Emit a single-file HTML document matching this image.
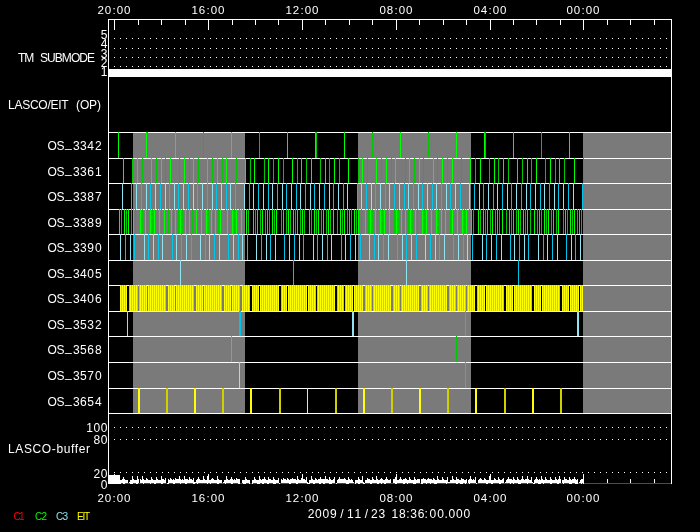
<!DOCTYPE html>
<html><head><meta charset="utf-8"><title>LASCO/EIT schedule</title>
<style>html,body{margin:0;padding:0;background:#000;overflow:hidden}svg{display:block;will-change:transform}text{font-family:"Liberation Sans",sans-serif;}</style>
</head><body>
<svg width="700" height="532" viewBox="0 0 700 532" shape-rendering="crispEdges">
<rect width="700" height="532" fill="#000"/>
<rect x="133" y="133" width="112" height="280" fill="#7a7a7a"/>
<rect x="358" y="133" width="113" height="280" fill="#7a7a7a"/>
<rect x="583" y="133" width="88" height="280" fill="#7a7a7a"/>
<rect x="108" y="19" width="1" height="465" fill="#fff"/>
<rect x="671" y="19" width="1" height="465" fill="#fff"/>
<rect x="108" y="19" width="564" height="1" fill="#fff"/>
<rect x="108" y="132" width="564" height="1" fill="#fff"/>
<rect x="108" y="158" width="564" height="1" fill="#fff"/>
<rect x="108" y="183" width="564" height="1" fill="#fff"/>
<rect x="108" y="209" width="564" height="1" fill="#fff"/>
<rect x="108" y="234" width="564" height="1" fill="#fff"/>
<rect x="108" y="260" width="564" height="1" fill="#fff"/>
<rect x="108" y="285" width="564" height="1" fill="#fff"/>
<rect x="108" y="311" width="564" height="1" fill="#fff"/>
<rect x="108" y="336" width="564" height="1" fill="#fff"/>
<rect x="108" y="362" width="564" height="1" fill="#fff"/>
<rect x="108" y="388" width="564" height="1" fill="#fff"/>
<rect x="108" y="413" width="564" height="1" fill="#fff"/>
<rect x="108" y="69" width="564" height="8" fill="#fff"/>
<rect x="114" y="19" width="1" height="11" fill="#fff"/>
<rect x="138" y="19" width="1" height="6" fill="#fff"/>
<rect x="161" y="19" width="1" height="6" fill="#fff"/>
<rect x="185" y="19" width="1" height="6" fill="#fff"/>
<rect x="208" y="19" width="1" height="11" fill="#fff"/>
<rect x="232" y="19" width="1" height="6" fill="#fff"/>
<rect x="255" y="19" width="1" height="6" fill="#fff"/>
<rect x="278" y="19" width="1" height="6" fill="#fff"/>
<rect x="302" y="19" width="1" height="11" fill="#fff"/>
<rect x="325" y="19" width="1" height="6" fill="#fff"/>
<rect x="349" y="19" width="1" height="6" fill="#fff"/>
<rect x="372" y="19" width="1" height="6" fill="#fff"/>
<rect x="396" y="19" width="1" height="11" fill="#fff"/>
<rect x="419" y="19" width="1" height="6" fill="#fff"/>
<rect x="443" y="19" width="1" height="6" fill="#fff"/>
<rect x="466" y="19" width="1" height="6" fill="#fff"/>
<rect x="490" y="19" width="1" height="11" fill="#fff"/>
<rect x="513" y="19" width="1" height="6" fill="#fff"/>
<rect x="536" y="19" width="1" height="6" fill="#fff"/>
<rect x="560" y="19" width="1" height="6" fill="#fff"/>
<rect x="583" y="19" width="1" height="11" fill="#fff"/>
<rect x="607" y="19" width="1" height="6" fill="#fff"/>
<rect x="630" y="19" width="1" height="6" fill="#fff"/>
<rect x="654" y="19" width="1" height="6" fill="#fff"/>
<path d="M114 38h1v1h-1zM120 38h1v1h-1zM126 38h1v1h-1zM132 38h1v1h-1zM138 38h1v1h-1zM144 38h1v1h-1zM150 38h1v1h-1zM156 38h1v1h-1zM162 38h1v1h-1zM168 38h1v1h-1zM174 38h1v1h-1zM180 38h1v1h-1zM186 38h1v1h-1zM192 38h1v1h-1zM198 38h1v1h-1zM204 38h1v1h-1zM210 38h1v1h-1zM216 38h1v1h-1zM222 38h1v1h-1zM228 38h1v1h-1zM234 38h1v1h-1zM240 38h1v1h-1zM246 38h1v1h-1zM252 38h1v1h-1zM258 38h1v1h-1zM264 38h1v1h-1zM270 38h1v1h-1zM276 38h1v1h-1zM282 38h1v1h-1zM288 38h1v1h-1zM294 38h1v1h-1zM300 38h1v1h-1zM306 38h1v1h-1zM312 38h1v1h-1zM318 38h1v1h-1zM324 38h1v1h-1zM330 38h1v1h-1zM336 38h1v1h-1zM342 38h1v1h-1zM348 38h1v1h-1zM354 38h1v1h-1zM360 38h1v1h-1zM366 38h1v1h-1zM372 38h1v1h-1zM378 38h1v1h-1zM384 38h1v1h-1zM390 38h1v1h-1zM396 38h1v1h-1zM402 38h1v1h-1zM408 38h1v1h-1zM414 38h1v1h-1zM420 38h1v1h-1zM426 38h1v1h-1zM432 38h1v1h-1zM438 38h1v1h-1zM444 38h1v1h-1zM450 38h1v1h-1zM456 38h1v1h-1zM462 38h1v1h-1zM468 38h1v1h-1zM474 38h1v1h-1zM480 38h1v1h-1zM486 38h1v1h-1zM492 38h1v1h-1zM498 38h1v1h-1zM504 38h1v1h-1zM510 38h1v1h-1zM516 38h1v1h-1zM522 38h1v1h-1zM528 38h1v1h-1zM534 38h1v1h-1zM540 38h1v1h-1zM546 38h1v1h-1zM552 38h1v1h-1zM558 38h1v1h-1zM564 38h1v1h-1zM570 38h1v1h-1zM576 38h1v1h-1zM582 38h1v1h-1zM588 38h1v1h-1zM594 38h1v1h-1zM600 38h1v1h-1zM606 38h1v1h-1zM612 38h1v1h-1zM618 38h1v1h-1zM624 38h1v1h-1zM630 38h1v1h-1zM636 38h1v1h-1zM642 38h1v1h-1zM648 38h1v1h-1zM654 38h1v1h-1zM660 38h1v1h-1zM666 38h1v1h-1zM114 48h1v1h-1zM120 48h1v1h-1zM126 48h1v1h-1zM132 48h1v1h-1zM138 48h1v1h-1zM144 48h1v1h-1zM150 48h1v1h-1zM156 48h1v1h-1zM162 48h1v1h-1zM168 48h1v1h-1zM174 48h1v1h-1zM180 48h1v1h-1zM186 48h1v1h-1zM192 48h1v1h-1zM198 48h1v1h-1zM204 48h1v1h-1zM210 48h1v1h-1zM216 48h1v1h-1zM222 48h1v1h-1zM228 48h1v1h-1zM234 48h1v1h-1zM240 48h1v1h-1zM246 48h1v1h-1zM252 48h1v1h-1zM258 48h1v1h-1zM264 48h1v1h-1zM270 48h1v1h-1zM276 48h1v1h-1zM282 48h1v1h-1zM288 48h1v1h-1zM294 48h1v1h-1zM300 48h1v1h-1zM306 48h1v1h-1zM312 48h1v1h-1zM318 48h1v1h-1zM324 48h1v1h-1zM330 48h1v1h-1zM336 48h1v1h-1zM342 48h1v1h-1zM348 48h1v1h-1zM354 48h1v1h-1zM360 48h1v1h-1zM366 48h1v1h-1zM372 48h1v1h-1zM378 48h1v1h-1zM384 48h1v1h-1zM390 48h1v1h-1zM396 48h1v1h-1zM402 48h1v1h-1zM408 48h1v1h-1zM414 48h1v1h-1zM420 48h1v1h-1zM426 48h1v1h-1zM432 48h1v1h-1zM438 48h1v1h-1zM444 48h1v1h-1zM450 48h1v1h-1zM456 48h1v1h-1zM462 48h1v1h-1zM468 48h1v1h-1zM474 48h1v1h-1zM480 48h1v1h-1zM486 48h1v1h-1zM492 48h1v1h-1zM498 48h1v1h-1zM504 48h1v1h-1zM510 48h1v1h-1zM516 48h1v1h-1zM522 48h1v1h-1zM528 48h1v1h-1zM534 48h1v1h-1zM540 48h1v1h-1zM546 48h1v1h-1zM552 48h1v1h-1zM558 48h1v1h-1zM564 48h1v1h-1zM570 48h1v1h-1zM576 48h1v1h-1zM582 48h1v1h-1zM588 48h1v1h-1zM594 48h1v1h-1zM600 48h1v1h-1zM606 48h1v1h-1zM612 48h1v1h-1zM618 48h1v1h-1zM624 48h1v1h-1zM630 48h1v1h-1zM636 48h1v1h-1zM642 48h1v1h-1zM648 48h1v1h-1zM654 48h1v1h-1zM660 48h1v1h-1zM666 48h1v1h-1zM114 57h1v1h-1zM120 57h1v1h-1zM126 57h1v1h-1zM132 57h1v1h-1zM138 57h1v1h-1zM144 57h1v1h-1zM150 57h1v1h-1zM156 57h1v1h-1zM162 57h1v1h-1zM168 57h1v1h-1zM174 57h1v1h-1zM180 57h1v1h-1zM186 57h1v1h-1zM192 57h1v1h-1zM198 57h1v1h-1zM204 57h1v1h-1zM210 57h1v1h-1zM216 57h1v1h-1zM222 57h1v1h-1zM228 57h1v1h-1zM234 57h1v1h-1zM240 57h1v1h-1zM246 57h1v1h-1zM252 57h1v1h-1zM258 57h1v1h-1zM264 57h1v1h-1zM270 57h1v1h-1zM276 57h1v1h-1zM282 57h1v1h-1zM288 57h1v1h-1zM294 57h1v1h-1zM300 57h1v1h-1zM306 57h1v1h-1zM312 57h1v1h-1zM318 57h1v1h-1zM324 57h1v1h-1zM330 57h1v1h-1zM336 57h1v1h-1zM342 57h1v1h-1zM348 57h1v1h-1zM354 57h1v1h-1zM360 57h1v1h-1zM366 57h1v1h-1zM372 57h1v1h-1zM378 57h1v1h-1zM384 57h1v1h-1zM390 57h1v1h-1zM396 57h1v1h-1zM402 57h1v1h-1zM408 57h1v1h-1zM414 57h1v1h-1zM420 57h1v1h-1zM426 57h1v1h-1zM432 57h1v1h-1zM438 57h1v1h-1zM444 57h1v1h-1zM450 57h1v1h-1zM456 57h1v1h-1zM462 57h1v1h-1zM468 57h1v1h-1zM474 57h1v1h-1zM480 57h1v1h-1zM486 57h1v1h-1zM492 57h1v1h-1zM498 57h1v1h-1zM504 57h1v1h-1zM510 57h1v1h-1zM516 57h1v1h-1zM522 57h1v1h-1zM528 57h1v1h-1zM534 57h1v1h-1zM540 57h1v1h-1zM546 57h1v1h-1zM552 57h1v1h-1zM558 57h1v1h-1zM564 57h1v1h-1zM570 57h1v1h-1zM576 57h1v1h-1zM582 57h1v1h-1zM588 57h1v1h-1zM594 57h1v1h-1zM600 57h1v1h-1zM606 57h1v1h-1zM612 57h1v1h-1zM618 57h1v1h-1zM624 57h1v1h-1zM630 57h1v1h-1zM636 57h1v1h-1zM642 57h1v1h-1zM648 57h1v1h-1zM654 57h1v1h-1zM660 57h1v1h-1zM666 57h1v1h-1zM114 66h1v1h-1zM120 66h1v1h-1zM126 66h1v1h-1zM132 66h1v1h-1zM138 66h1v1h-1zM144 66h1v1h-1zM150 66h1v1h-1zM156 66h1v1h-1zM162 66h1v1h-1zM168 66h1v1h-1zM174 66h1v1h-1zM180 66h1v1h-1zM186 66h1v1h-1zM192 66h1v1h-1zM198 66h1v1h-1zM204 66h1v1h-1zM210 66h1v1h-1zM216 66h1v1h-1zM222 66h1v1h-1zM228 66h1v1h-1zM234 66h1v1h-1zM240 66h1v1h-1zM246 66h1v1h-1zM252 66h1v1h-1zM258 66h1v1h-1zM264 66h1v1h-1zM270 66h1v1h-1zM276 66h1v1h-1zM282 66h1v1h-1zM288 66h1v1h-1zM294 66h1v1h-1zM300 66h1v1h-1zM306 66h1v1h-1zM312 66h1v1h-1zM318 66h1v1h-1zM324 66h1v1h-1zM330 66h1v1h-1zM336 66h1v1h-1zM342 66h1v1h-1zM348 66h1v1h-1zM354 66h1v1h-1zM360 66h1v1h-1zM366 66h1v1h-1zM372 66h1v1h-1zM378 66h1v1h-1zM384 66h1v1h-1zM390 66h1v1h-1zM396 66h1v1h-1zM402 66h1v1h-1zM408 66h1v1h-1zM414 66h1v1h-1zM420 66h1v1h-1zM426 66h1v1h-1zM432 66h1v1h-1zM438 66h1v1h-1zM444 66h1v1h-1zM450 66h1v1h-1zM456 66h1v1h-1zM462 66h1v1h-1zM468 66h1v1h-1zM474 66h1v1h-1zM480 66h1v1h-1zM486 66h1v1h-1zM492 66h1v1h-1zM498 66h1v1h-1zM504 66h1v1h-1zM510 66h1v1h-1zM516 66h1v1h-1zM522 66h1v1h-1zM528 66h1v1h-1zM534 66h1v1h-1zM540 66h1v1h-1zM546 66h1v1h-1zM552 66h1v1h-1zM558 66h1v1h-1zM564 66h1v1h-1zM570 66h1v1h-1zM576 66h1v1h-1zM582 66h1v1h-1zM588 66h1v1h-1zM594 66h1v1h-1zM600 66h1v1h-1zM606 66h1v1h-1zM612 66h1v1h-1zM618 66h1v1h-1zM624 66h1v1h-1zM630 66h1v1h-1zM636 66h1v1h-1zM642 66h1v1h-1zM648 66h1v1h-1zM654 66h1v1h-1zM660 66h1v1h-1zM666 66h1v1h-1zM114 427h1v1h-1zM120 427h1v1h-1zM126 427h1v1h-1zM132 427h1v1h-1zM138 427h1v1h-1zM144 427h1v1h-1zM150 427h1v1h-1zM156 427h1v1h-1zM162 427h1v1h-1zM168 427h1v1h-1zM174 427h1v1h-1zM180 427h1v1h-1zM186 427h1v1h-1zM192 427h1v1h-1zM198 427h1v1h-1zM204 427h1v1h-1zM210 427h1v1h-1zM216 427h1v1h-1zM222 427h1v1h-1zM228 427h1v1h-1zM234 427h1v1h-1zM240 427h1v1h-1zM246 427h1v1h-1zM252 427h1v1h-1zM258 427h1v1h-1zM264 427h1v1h-1zM270 427h1v1h-1zM276 427h1v1h-1zM282 427h1v1h-1zM288 427h1v1h-1zM294 427h1v1h-1zM300 427h1v1h-1zM306 427h1v1h-1zM312 427h1v1h-1zM318 427h1v1h-1zM324 427h1v1h-1zM330 427h1v1h-1zM336 427h1v1h-1zM342 427h1v1h-1zM348 427h1v1h-1zM354 427h1v1h-1zM360 427h1v1h-1zM366 427h1v1h-1zM372 427h1v1h-1zM378 427h1v1h-1zM384 427h1v1h-1zM390 427h1v1h-1zM396 427h1v1h-1zM402 427h1v1h-1zM408 427h1v1h-1zM414 427h1v1h-1zM420 427h1v1h-1zM426 427h1v1h-1zM432 427h1v1h-1zM438 427h1v1h-1zM444 427h1v1h-1zM450 427h1v1h-1zM456 427h1v1h-1zM462 427h1v1h-1zM468 427h1v1h-1zM474 427h1v1h-1zM480 427h1v1h-1zM486 427h1v1h-1zM492 427h1v1h-1zM498 427h1v1h-1zM504 427h1v1h-1zM510 427h1v1h-1zM516 427h1v1h-1zM522 427h1v1h-1zM528 427h1v1h-1zM534 427h1v1h-1zM540 427h1v1h-1zM546 427h1v1h-1zM552 427h1v1h-1zM558 427h1v1h-1zM564 427h1v1h-1zM570 427h1v1h-1zM576 427h1v1h-1zM582 427h1v1h-1zM588 427h1v1h-1zM594 427h1v1h-1zM600 427h1v1h-1zM606 427h1v1h-1zM612 427h1v1h-1zM618 427h1v1h-1zM624 427h1v1h-1zM630 427h1v1h-1zM636 427h1v1h-1zM642 427h1v1h-1zM648 427h1v1h-1zM654 427h1v1h-1zM660 427h1v1h-1zM666 427h1v1h-1zM114 439h1v1h-1zM120 439h1v1h-1zM126 439h1v1h-1zM132 439h1v1h-1zM138 439h1v1h-1zM144 439h1v1h-1zM150 439h1v1h-1zM156 439h1v1h-1zM162 439h1v1h-1zM168 439h1v1h-1zM174 439h1v1h-1zM180 439h1v1h-1zM186 439h1v1h-1zM192 439h1v1h-1zM198 439h1v1h-1zM204 439h1v1h-1zM210 439h1v1h-1zM216 439h1v1h-1zM222 439h1v1h-1zM228 439h1v1h-1zM234 439h1v1h-1zM240 439h1v1h-1zM246 439h1v1h-1zM252 439h1v1h-1zM258 439h1v1h-1zM264 439h1v1h-1zM270 439h1v1h-1zM276 439h1v1h-1zM282 439h1v1h-1zM288 439h1v1h-1zM294 439h1v1h-1zM300 439h1v1h-1zM306 439h1v1h-1zM312 439h1v1h-1zM318 439h1v1h-1zM324 439h1v1h-1zM330 439h1v1h-1zM336 439h1v1h-1zM342 439h1v1h-1zM348 439h1v1h-1zM354 439h1v1h-1zM360 439h1v1h-1zM366 439h1v1h-1zM372 439h1v1h-1zM378 439h1v1h-1zM384 439h1v1h-1zM390 439h1v1h-1zM396 439h1v1h-1zM402 439h1v1h-1zM408 439h1v1h-1zM414 439h1v1h-1zM420 439h1v1h-1zM426 439h1v1h-1zM432 439h1v1h-1zM438 439h1v1h-1zM444 439h1v1h-1zM450 439h1v1h-1zM456 439h1v1h-1zM462 439h1v1h-1zM468 439h1v1h-1zM474 439h1v1h-1zM480 439h1v1h-1zM486 439h1v1h-1zM492 439h1v1h-1zM498 439h1v1h-1zM504 439h1v1h-1zM510 439h1v1h-1zM516 439h1v1h-1zM522 439h1v1h-1zM528 439h1v1h-1zM534 439h1v1h-1zM540 439h1v1h-1zM546 439h1v1h-1zM552 439h1v1h-1zM558 439h1v1h-1zM564 439h1v1h-1zM570 439h1v1h-1zM576 439h1v1h-1zM582 439h1v1h-1zM588 439h1v1h-1zM594 439h1v1h-1zM600 439h1v1h-1zM606 439h1v1h-1zM612 439h1v1h-1zM618 439h1v1h-1zM624 439h1v1h-1zM630 439h1v1h-1zM636 439h1v1h-1zM642 439h1v1h-1zM648 439h1v1h-1zM654 439h1v1h-1zM660 439h1v1h-1zM666 439h1v1h-1zM114 472h1v1h-1zM120 472h1v1h-1zM126 472h1v1h-1zM132 472h1v1h-1zM138 472h1v1h-1zM144 472h1v1h-1zM150 472h1v1h-1zM156 472h1v1h-1zM162 472h1v1h-1zM168 472h1v1h-1zM174 472h1v1h-1zM180 472h1v1h-1zM186 472h1v1h-1zM192 472h1v1h-1zM198 472h1v1h-1zM204 472h1v1h-1zM210 472h1v1h-1zM216 472h1v1h-1zM222 472h1v1h-1zM228 472h1v1h-1zM234 472h1v1h-1zM240 472h1v1h-1zM246 472h1v1h-1zM252 472h1v1h-1zM258 472h1v1h-1zM264 472h1v1h-1zM270 472h1v1h-1zM276 472h1v1h-1zM282 472h1v1h-1zM288 472h1v1h-1zM294 472h1v1h-1zM300 472h1v1h-1zM306 472h1v1h-1zM312 472h1v1h-1zM318 472h1v1h-1zM324 472h1v1h-1zM330 472h1v1h-1zM336 472h1v1h-1zM342 472h1v1h-1zM348 472h1v1h-1zM354 472h1v1h-1zM360 472h1v1h-1zM366 472h1v1h-1zM372 472h1v1h-1zM378 472h1v1h-1zM384 472h1v1h-1zM390 472h1v1h-1zM396 472h1v1h-1zM402 472h1v1h-1zM408 472h1v1h-1zM414 472h1v1h-1zM420 472h1v1h-1zM426 472h1v1h-1zM432 472h1v1h-1zM438 472h1v1h-1zM444 472h1v1h-1zM450 472h1v1h-1zM456 472h1v1h-1zM462 472h1v1h-1zM468 472h1v1h-1zM474 472h1v1h-1zM480 472h1v1h-1zM486 472h1v1h-1zM492 472h1v1h-1zM498 472h1v1h-1zM504 472h1v1h-1zM510 472h1v1h-1zM516 472h1v1h-1zM522 472h1v1h-1zM528 472h1v1h-1zM534 472h1v1h-1zM540 472h1v1h-1zM546 472h1v1h-1zM552 472h1v1h-1zM558 472h1v1h-1zM564 472h1v1h-1zM570 472h1v1h-1zM576 472h1v1h-1zM582 472h1v1h-1zM588 472h1v1h-1zM594 472h1v1h-1zM600 472h1v1h-1zM606 472h1v1h-1zM612 472h1v1h-1zM618 472h1v1h-1zM624 472h1v1h-1zM630 472h1v1h-1zM636 472h1v1h-1zM642 472h1v1h-1zM648 472h1v1h-1zM654 472h1v1h-1zM660 472h1v1h-1zM666 472h1v1h-1z" fill="#fff"/>
<rect x="118" y="132" width="1" height="26" fill="#00ff00"/>
<rect x="146" y="132" width="1" height="26" fill="#00ff00"/>
<rect x="147" y="132" width="1" height="26" fill="#00c800"/>
<rect x="175" y="132" width="1" height="26" fill="#00ff00"/>
<rect x="203" y="132" width="1" height="26" fill="#00c800"/>
<rect x="231" y="132" width="1" height="26" fill="#00ff00"/>
<rect x="259" y="132" width="1" height="26" fill="#00c800"/>
<rect x="287" y="132" width="1" height="26" fill="#00ff00"/>
<rect x="315" y="132" width="1" height="26" fill="#00ff00"/>
<rect x="316" y="132" width="1" height="26" fill="#00c800"/>
<rect x="344" y="132" width="1" height="26" fill="#00ff00"/>
<rect x="372" y="132" width="1" height="26" fill="#00c800"/>
<rect x="400" y="132" width="1" height="26" fill="#00ff00"/>
<rect x="428" y="132" width="1" height="26" fill="#00c800"/>
<rect x="456" y="132" width="1" height="26" fill="#00ff00"/>
<rect x="484" y="132" width="1" height="26" fill="#00ff00"/>
<rect x="485" y="132" width="1" height="26" fill="#00c800"/>
<rect x="513" y="132" width="1" height="26" fill="#00ff00"/>
<rect x="541" y="132" width="1" height="26" fill="#00c800"/>
<rect x="569" y="132" width="1" height="26" fill="#00ff00"/>
<rect x="123" y="158" width="1" height="25" fill="#00ff00"/>
<rect x="132" y="158" width="1" height="25" fill="#00c800"/>
<rect x="137" y="158" width="1" height="25" fill="#00ff00"/>
<rect x="142" y="158" width="1" height="25" fill="#00c800"/>
<rect x="151" y="158" width="1" height="25" fill="#00ff00"/>
<rect x="156" y="158" width="1" height="25" fill="#00c800"/>
<rect x="161" y="158" width="1" height="25" fill="#00ff00"/>
<rect x="165" y="158" width="1" height="25" fill="#00c800"/>
<rect x="170" y="158" width="1" height="25" fill="#00ff00"/>
<rect x="179" y="158" width="1" height="25" fill="#00c800"/>
<rect x="184" y="158" width="1" height="25" fill="#00ff00"/>
<rect x="189" y="158" width="1" height="25" fill="#00c800"/>
<rect x="193" y="158" width="1" height="25" fill="#00ff00"/>
<rect x="198" y="158" width="1" height="25" fill="#00c800"/>
<rect x="207" y="158" width="1" height="25" fill="#00ff00"/>
<rect x="212" y="158" width="1" height="25" fill="#00c800"/>
<rect x="217" y="158" width="1" height="25" fill="#00ff00"/>
<rect x="222" y="158" width="1" height="25" fill="#00c800"/>
<rect x="226" y="158" width="1" height="25" fill="#00ff00"/>
<rect x="236" y="158" width="1" height="25" fill="#00c800"/>
<rect x="245" y="158" width="1" height="25" fill="#00ff00"/>
<rect x="250" y="158" width="1" height="25" fill="#00c800"/>
<rect x="254" y="158" width="1" height="25" fill="#00ff00"/>
<rect x="264" y="158" width="1" height="25" fill="#00c800"/>
<rect x="268" y="158" width="1" height="25" fill="#00ff00"/>
<rect x="273" y="158" width="1" height="25" fill="#00c800"/>
<rect x="278" y="158" width="1" height="25" fill="#00ff00"/>
<rect x="283" y="158" width="1" height="25" fill="#00c800"/>
<rect x="292" y="158" width="1" height="25" fill="#00ff00"/>
<rect x="297" y="158" width="1" height="25" fill="#00c800"/>
<rect x="301" y="158" width="1" height="25" fill="#00ff00"/>
<rect x="306" y="158" width="1" height="25" fill="#00c800"/>
<rect x="311" y="158" width="1" height="25" fill="#00ff00"/>
<rect x="320" y="158" width="1" height="25" fill="#00c800"/>
<rect x="325" y="158" width="1" height="25" fill="#00ff00"/>
<rect x="329" y="158" width="1" height="25" fill="#00c800"/>
<rect x="334" y="158" width="1" height="25" fill="#00ff00"/>
<rect x="339" y="158" width="1" height="25" fill="#00c800"/>
<rect x="348" y="158" width="1" height="25" fill="#00ff00"/>
<rect x="358" y="158" width="1" height="25" fill="#00c800"/>
<rect x="362" y="158" width="1" height="25" fill="#00ff00"/>
<rect x="367" y="158" width="1" height="25" fill="#00c800"/>
<rect x="376" y="158" width="1" height="25" fill="#00ff00"/>
<rect x="381" y="158" width="1" height="25" fill="#00c800"/>
<rect x="386" y="158" width="1" height="25" fill="#00ff00"/>
<rect x="391" y="158" width="1" height="25" fill="#00c800"/>
<rect x="395" y="158" width="1" height="25" fill="#00ff00"/>
<rect x="405" y="158" width="1" height="25" fill="#00c800"/>
<rect x="409" y="158" width="1" height="25" fill="#00ff00"/>
<rect x="414" y="158" width="1" height="25" fill="#00c800"/>
<rect x="419" y="158" width="1" height="25" fill="#00ff00"/>
<rect x="423" y="158" width="1" height="25" fill="#00c800"/>
<rect x="433" y="158" width="1" height="25" fill="#00ff00"/>
<rect x="437" y="158" width="1" height="25" fill="#00c800"/>
<rect x="442" y="158" width="1" height="25" fill="#00ff00"/>
<rect x="447" y="158" width="1" height="25" fill="#00c800"/>
<rect x="452" y="158" width="1" height="25" fill="#00ff00"/>
<rect x="461" y="158" width="1" height="25" fill="#00c800"/>
<rect x="470" y="158" width="1" height="25" fill="#00ff00"/>
<rect x="475" y="158" width="1" height="25" fill="#00c800"/>
<rect x="480" y="158" width="1" height="25" fill="#00ff00"/>
<rect x="489" y="158" width="1" height="25" fill="#00c800"/>
<rect x="494" y="158" width="1" height="25" fill="#00ff00"/>
<rect x="498" y="158" width="1" height="25" fill="#00c800"/>
<rect x="503" y="158" width="1" height="25" fill="#00ff00"/>
<rect x="508" y="158" width="1" height="25" fill="#00c800"/>
<rect x="517" y="158" width="1" height="25" fill="#00ff00"/>
<rect x="522" y="158" width="1" height="25" fill="#00c800"/>
<rect x="527" y="158" width="1" height="25" fill="#00ff00"/>
<rect x="531" y="158" width="1" height="25" fill="#00c800"/>
<rect x="536" y="158" width="1" height="25" fill="#00ff00"/>
<rect x="545" y="158" width="1" height="25" fill="#00c800"/>
<rect x="550" y="158" width="1" height="25" fill="#00ff00"/>
<rect x="555" y="158" width="1" height="25" fill="#00c800"/>
<rect x="559" y="158" width="1" height="25" fill="#00ff00"/>
<rect x="564" y="158" width="1" height="25" fill="#00c800"/>
<rect x="574" y="158" width="1" height="25" fill="#00ff00"/>
<rect x="583" y="158" width="1" height="25" fill="#00c800"/>
<rect x="122" y="183" width="1" height="26" fill="#8fe4f0"/>
<rect x="131" y="183" width="1" height="26" fill="#00c4e8"/>
<rect x="136" y="183" width="1" height="26" fill="#8fe4f0"/>
<rect x="141" y="183" width="1" height="26" fill="#00c4e8"/>
<rect x="146" y="183" width="1" height="26" fill="#8fe4f0"/>
<rect x="150" y="183" width="1" height="26" fill="#00c4e8"/>
<rect x="155" y="183" width="1" height="26" fill="#8fe4f0"/>
<rect x="160" y="183" width="1" height="26" fill="#00c4e8"/>
<rect x="165" y="183" width="1" height="26" fill="#8fe4f0"/>
<rect x="169" y="183" width="1" height="26" fill="#00c4e8"/>
<rect x="174" y="183" width="1" height="26" fill="#8fe4f0"/>
<rect x="178" y="183" width="1" height="26" fill="#00c4e8"/>
<rect x="183" y="183" width="1" height="26" fill="#8fe4f0"/>
<rect x="188" y="183" width="1" height="26" fill="#00c4e8"/>
<rect x="193" y="183" width="1" height="26" fill="#8fe4f0"/>
<rect x="197" y="183" width="1" height="26" fill="#00c4e8"/>
<rect x="202" y="183" width="1" height="26" fill="#8fe4f0"/>
<rect x="207" y="183" width="1" height="26" fill="#00c4e8"/>
<rect x="212" y="183" width="1" height="26" fill="#8fe4f0"/>
<rect x="216" y="183" width="1" height="26" fill="#00c4e8"/>
<rect x="221" y="183" width="1" height="26" fill="#8fe4f0"/>
<rect x="226" y="183" width="1" height="26" fill="#00c4e8"/>
<rect x="230" y="183" width="1" height="26" fill="#8fe4f0"/>
<rect x="235" y="183" width="1" height="26" fill="#00c4e8"/>
<rect x="244" y="183" width="1" height="26" fill="#8fe4f0"/>
<rect x="249" y="183" width="1" height="26" fill="#00c4e8"/>
<rect x="253" y="183" width="1" height="26" fill="#8fe4f0"/>
<rect x="258" y="183" width="1" height="26" fill="#00c4e8"/>
<rect x="263" y="183" width="1" height="26" fill="#8fe4f0"/>
<rect x="268" y="183" width="1" height="26" fill="#00c4e8"/>
<rect x="272" y="183" width="1" height="26" fill="#8fe4f0"/>
<rect x="277" y="183" width="1" height="26" fill="#00c4e8"/>
<rect x="282" y="183" width="1" height="26" fill="#8fe4f0"/>
<rect x="286" y="183" width="1" height="26" fill="#00c4e8"/>
<rect x="291" y="183" width="1" height="26" fill="#8fe4f0"/>
<rect x="296" y="183" width="1" height="26" fill="#00c4e8"/>
<rect x="300" y="183" width="1" height="26" fill="#8fe4f0"/>
<rect x="305" y="183" width="1" height="26" fill="#00c4e8"/>
<rect x="310" y="183" width="1" height="26" fill="#8fe4f0"/>
<rect x="314" y="183" width="1" height="26" fill="#00c4e8"/>
<rect x="319" y="183" width="1" height="26" fill="#8fe4f0"/>
<rect x="324" y="183" width="1" height="26" fill="#00c4e8"/>
<rect x="329" y="183" width="1" height="26" fill="#8fe4f0"/>
<rect x="333" y="183" width="1" height="26" fill="#00c4e8"/>
<rect x="338" y="183" width="1" height="26" fill="#8fe4f0"/>
<rect x="343" y="183" width="1" height="26" fill="#00c4e8"/>
<rect x="347" y="183" width="1" height="26" fill="#8fe4f0"/>
<rect x="357" y="183" width="1" height="26" fill="#00c4e8"/>
<rect x="361" y="183" width="1" height="26" fill="#8fe4f0"/>
<rect x="366" y="183" width="1" height="26" fill="#00c4e8"/>
<rect x="371" y="183" width="1" height="26" fill="#8fe4f0"/>
<rect x="375" y="183" width="1" height="26" fill="#00c4e8"/>
<rect x="380" y="183" width="1" height="26" fill="#8fe4f0"/>
<rect x="385" y="183" width="1" height="26" fill="#00c4e8"/>
<rect x="389" y="183" width="1" height="26" fill="#8fe4f0"/>
<rect x="394" y="183" width="1" height="26" fill="#00c4e8"/>
<rect x="399" y="183" width="1" height="26" fill="#8fe4f0"/>
<rect x="404" y="183" width="1" height="26" fill="#00c4e8"/>
<rect x="408" y="183" width="1" height="26" fill="#8fe4f0"/>
<rect x="413" y="183" width="1" height="26" fill="#00c4e8"/>
<rect x="418" y="183" width="1" height="26" fill="#8fe4f0"/>
<rect x="422" y="183" width="1" height="26" fill="#00c4e8"/>
<rect x="427" y="183" width="1" height="26" fill="#8fe4f0"/>
<rect x="432" y="183" width="1" height="26" fill="#00c4e8"/>
<rect x="436" y="183" width="1" height="26" fill="#8fe4f0"/>
<rect x="441" y="183" width="1" height="26" fill="#00c4e8"/>
<rect x="446" y="183" width="1" height="26" fill="#8fe4f0"/>
<rect x="450" y="183" width="1" height="26" fill="#00c4e8"/>
<rect x="455" y="183" width="1" height="26" fill="#8fe4f0"/>
<rect x="460" y="183" width="1" height="26" fill="#00c4e8"/>
<rect x="469" y="183" width="1" height="26" fill="#8fe4f0"/>
<rect x="474" y="183" width="1" height="26" fill="#00c4e8"/>
<rect x="479" y="183" width="1" height="26" fill="#8fe4f0"/>
<rect x="483" y="183" width="1" height="26" fill="#00c4e8"/>
<rect x="488" y="183" width="1" height="26" fill="#8fe4f0"/>
<rect x="493" y="183" width="1" height="26" fill="#00c4e8"/>
<rect x="497" y="183" width="1" height="26" fill="#8fe4f0"/>
<rect x="502" y="183" width="1" height="26" fill="#00c4e8"/>
<rect x="507" y="183" width="1" height="26" fill="#8fe4f0"/>
<rect x="511" y="183" width="1" height="26" fill="#00c4e8"/>
<rect x="516" y="183" width="1" height="26" fill="#8fe4f0"/>
<rect x="521" y="183" width="1" height="26" fill="#00c4e8"/>
<rect x="526" y="183" width="1" height="26" fill="#8fe4f0"/>
<rect x="530" y="183" width="1" height="26" fill="#00c4e8"/>
<rect x="535" y="183" width="1" height="26" fill="#8fe4f0"/>
<rect x="540" y="183" width="1" height="26" fill="#00c4e8"/>
<rect x="544" y="183" width="1" height="26" fill="#8fe4f0"/>
<rect x="549" y="183" width="1" height="26" fill="#00c4e8"/>
<rect x="554" y="183" width="1" height="26" fill="#8fe4f0"/>
<rect x="558" y="183" width="1" height="26" fill="#00c4e8"/>
<rect x="563" y="183" width="1" height="26" fill="#8fe4f0"/>
<rect x="568" y="183" width="1" height="26" fill="#00c4e8"/>
<rect x="573" y="183" width="1" height="26" fill="#8fe4f0"/>
<rect x="582" y="183" width="1" height="26" fill="#00c4e8"/>
<rect x="119" y="209" width="1" height="25" fill="#00ff00"/>
<rect x="121" y="209" width="1" height="25" fill="#00c800"/>
<rect x="124" y="209" width="1" height="25" fill="#00ff00"/>
<rect x="126" y="209" width="1" height="25" fill="#00c800"/>
<rect x="128" y="209" width="1" height="25" fill="#00ff00"/>
<rect x="131" y="209" width="1" height="25" fill="#00c800"/>
<rect x="133" y="209" width="1" height="25" fill="#00ff00"/>
<rect x="135" y="209" width="1" height="25" fill="#00c800"/>
<rect x="140" y="209" width="1" height="25" fill="#00ff00"/>
<rect x="142" y="209" width="1" height="25" fill="#00c800"/>
<rect x="145" y="209" width="1" height="25" fill="#00ff00"/>
<rect x="147" y="209" width="1" height="25" fill="#00c800"/>
<rect x="150" y="209" width="1" height="25" fill="#00ff00"/>
<rect x="152" y="209" width="1" height="25" fill="#00c800"/>
<rect x="154" y="209" width="1" height="25" fill="#00ff00"/>
<rect x="157" y="209" width="1" height="25" fill="#00c800"/>
<rect x="159" y="209" width="1" height="25" fill="#00ff00"/>
<rect x="161" y="209" width="1" height="25" fill="#00c800"/>
<rect x="164" y="209" width="1" height="25" fill="#00ff00"/>
<rect x="168" y="209" width="1" height="25" fill="#00c800"/>
<rect x="171" y="209" width="1" height="25" fill="#00ff00"/>
<rect x="173" y="209" width="1" height="25" fill="#00c800"/>
<rect x="175" y="209" width="1" height="25" fill="#00ff00"/>
<rect x="178" y="209" width="1" height="25" fill="#00c800"/>
<rect x="180" y="209" width="1" height="25" fill="#00ff00"/>
<rect x="182" y="209" width="1" height="25" fill="#00c800"/>
<rect x="185" y="209" width="1" height="25" fill="#00ff00"/>
<rect x="187" y="209" width="1" height="25" fill="#00c800"/>
<rect x="189" y="209" width="1" height="25" fill="#00ff00"/>
<rect x="192" y="209" width="1" height="25" fill="#00c800"/>
<rect x="196" y="209" width="1" height="25" fill="#00ff00"/>
<rect x="199" y="209" width="1" height="25" fill="#00c800"/>
<rect x="201" y="209" width="1" height="25" fill="#00ff00"/>
<rect x="203" y="209" width="1" height="25" fill="#00c800"/>
<rect x="206" y="209" width="1" height="25" fill="#00ff00"/>
<rect x="208" y="209" width="1" height="25" fill="#00c800"/>
<rect x="211" y="209" width="1" height="25" fill="#00ff00"/>
<rect x="213" y="209" width="1" height="25" fill="#00c800"/>
<rect x="215" y="209" width="1" height="25" fill="#00ff00"/>
<rect x="218" y="209" width="1" height="25" fill="#00c800"/>
<rect x="220" y="209" width="1" height="25" fill="#00ff00"/>
<rect x="225" y="209" width="1" height="25" fill="#00c800"/>
<rect x="227" y="209" width="1" height="25" fill="#00ff00"/>
<rect x="229" y="209" width="1" height="25" fill="#00c800"/>
<rect x="232" y="209" width="1" height="25" fill="#00ff00"/>
<rect x="234" y="209" width="1" height="25" fill="#00c800"/>
<rect x="236" y="209" width="1" height="25" fill="#00ff00"/>
<rect x="239" y="209" width="1" height="25" fill="#00c800"/>
<rect x="241" y="209" width="1" height="25" fill="#00ff00"/>
<rect x="243" y="209" width="1" height="25" fill="#00c800"/>
<rect x="246" y="209" width="1" height="25" fill="#00ff00"/>
<rect x="248" y="209" width="1" height="25" fill="#00c800"/>
<rect x="253" y="209" width="1" height="25" fill="#00ff00"/>
<rect x="255" y="209" width="1" height="25" fill="#00c800"/>
<rect x="257" y="209" width="1" height="25" fill="#00ff00"/>
<rect x="260" y="209" width="1" height="25" fill="#00c800"/>
<rect x="262" y="209" width="1" height="25" fill="#00ff00"/>
<rect x="265" y="209" width="1" height="25" fill="#00c800"/>
<rect x="267" y="209" width="1" height="25" fill="#00ff00"/>
<rect x="269" y="209" width="1" height="25" fill="#00c800"/>
<rect x="272" y="209" width="1" height="25" fill="#00ff00"/>
<rect x="274" y="209" width="1" height="25" fill="#00c800"/>
<rect x="276" y="209" width="1" height="25" fill="#00ff00"/>
<rect x="281" y="209" width="1" height="25" fill="#00c800"/>
<rect x="283" y="209" width="1" height="25" fill="#00ff00"/>
<rect x="286" y="209" width="1" height="25" fill="#00c800"/>
<rect x="288" y="209" width="1" height="25" fill="#00ff00"/>
<rect x="290" y="209" width="1" height="25" fill="#00c800"/>
<rect x="293" y="209" width="1" height="25" fill="#00ff00"/>
<rect x="295" y="209" width="1" height="25" fill="#00c800"/>
<rect x="297" y="209" width="1" height="25" fill="#00ff00"/>
<rect x="300" y="209" width="1" height="25" fill="#00c800"/>
<rect x="302" y="209" width="1" height="25" fill="#00ff00"/>
<rect x="304" y="209" width="1" height="25" fill="#00c800"/>
<rect x="309" y="209" width="1" height="25" fill="#00ff00"/>
<rect x="311" y="209" width="1" height="25" fill="#00c800"/>
<rect x="314" y="209" width="1" height="25" fill="#00ff00"/>
<rect x="316" y="209" width="1" height="25" fill="#00c800"/>
<rect x="318" y="209" width="1" height="25" fill="#00ff00"/>
<rect x="321" y="209" width="1" height="25" fill="#00c800"/>
<rect x="323" y="209" width="1" height="25" fill="#00ff00"/>
<rect x="326" y="209" width="1" height="25" fill="#00c800"/>
<rect x="328" y="209" width="1" height="25" fill="#00ff00"/>
<rect x="330" y="209" width="1" height="25" fill="#00c800"/>
<rect x="333" y="209" width="1" height="25" fill="#00ff00"/>
<rect x="337" y="209" width="1" height="25" fill="#00c800"/>
<rect x="340" y="209" width="1" height="25" fill="#00ff00"/>
<rect x="342" y="209" width="1" height="25" fill="#00c800"/>
<rect x="344" y="209" width="1" height="25" fill="#00ff00"/>
<rect x="347" y="209" width="1" height="25" fill="#00c800"/>
<rect x="349" y="209" width="1" height="25" fill="#00ff00"/>
<rect x="351" y="209" width="1" height="25" fill="#00c800"/>
<rect x="354" y="209" width="1" height="25" fill="#00ff00"/>
<rect x="356" y="209" width="1" height="25" fill="#00c800"/>
<rect x="358" y="209" width="1" height="25" fill="#00ff00"/>
<rect x="361" y="209" width="1" height="25" fill="#00c800"/>
<rect x="365" y="209" width="1" height="25" fill="#00ff00"/>
<rect x="368" y="209" width="1" height="25" fill="#00c800"/>
<rect x="370" y="209" width="1" height="25" fill="#00ff00"/>
<rect x="372" y="209" width="1" height="25" fill="#00c800"/>
<rect x="375" y="209" width="1" height="25" fill="#00ff00"/>
<rect x="377" y="209" width="1" height="25" fill="#00c800"/>
<rect x="380" y="209" width="1" height="25" fill="#00ff00"/>
<rect x="382" y="209" width="1" height="25" fill="#00c800"/>
<rect x="384" y="209" width="1" height="25" fill="#00ff00"/>
<rect x="387" y="209" width="1" height="25" fill="#00c800"/>
<rect x="389" y="209" width="1" height="25" fill="#00ff00"/>
<rect x="394" y="209" width="1" height="25" fill="#00c800"/>
<rect x="396" y="209" width="1" height="25" fill="#00ff00"/>
<rect x="398" y="209" width="1" height="25" fill="#00c800"/>
<rect x="401" y="209" width="1" height="25" fill="#00ff00"/>
<rect x="403" y="209" width="1" height="25" fill="#00c800"/>
<rect x="405" y="209" width="1" height="25" fill="#00ff00"/>
<rect x="408" y="209" width="1" height="25" fill="#00c800"/>
<rect x="410" y="209" width="1" height="25" fill="#00ff00"/>
<rect x="412" y="209" width="1" height="25" fill="#00c800"/>
<rect x="415" y="209" width="1" height="25" fill="#00ff00"/>
<rect x="417" y="209" width="1" height="25" fill="#00c800"/>
<rect x="422" y="209" width="1" height="25" fill="#00ff00"/>
<rect x="424" y="209" width="1" height="25" fill="#00c800"/>
<rect x="426" y="209" width="1" height="25" fill="#00ff00"/>
<rect x="429" y="209" width="1" height="25" fill="#00c800"/>
<rect x="431" y="209" width="1" height="25" fill="#00ff00"/>
<rect x="433" y="209" width="1" height="25" fill="#00c800"/>
<rect x="436" y="209" width="1" height="25" fill="#00ff00"/>
<rect x="438" y="209" width="1" height="25" fill="#00c800"/>
<rect x="441" y="209" width="1" height="25" fill="#00ff00"/>
<rect x="443" y="209" width="1" height="25" fill="#00c800"/>
<rect x="445" y="209" width="1" height="25" fill="#00ff00"/>
<rect x="450" y="209" width="1" height="25" fill="#00c800"/>
<rect x="452" y="209" width="1" height="25" fill="#00ff00"/>
<rect x="455" y="209" width="1" height="25" fill="#00c800"/>
<rect x="457" y="209" width="1" height="25" fill="#00ff00"/>
<rect x="459" y="209" width="1" height="25" fill="#00c800"/>
<rect x="462" y="209" width="1" height="25" fill="#00ff00"/>
<rect x="464" y="209" width="1" height="25" fill="#00c800"/>
<rect x="466" y="209" width="1" height="25" fill="#00ff00"/>
<rect x="469" y="209" width="1" height="25" fill="#00c800"/>
<rect x="471" y="209" width="1" height="25" fill="#00ff00"/>
<rect x="473" y="209" width="1" height="25" fill="#00c800"/>
<rect x="478" y="209" width="1" height="25" fill="#00ff00"/>
<rect x="480" y="209" width="1" height="25" fill="#00c800"/>
<rect x="483" y="209" width="1" height="25" fill="#00ff00"/>
<rect x="485" y="209" width="1" height="25" fill="#00c800"/>
<rect x="487" y="209" width="1" height="25" fill="#00ff00"/>
<rect x="490" y="209" width="1" height="25" fill="#00c800"/>
<rect x="492" y="209" width="1" height="25" fill="#00ff00"/>
<rect x="495" y="209" width="1" height="25" fill="#00c800"/>
<rect x="497" y="209" width="1" height="25" fill="#00ff00"/>
<rect x="499" y="209" width="1" height="25" fill="#00c800"/>
<rect x="502" y="209" width="1" height="25" fill="#00ff00"/>
<rect x="506" y="209" width="1" height="25" fill="#00c800"/>
<rect x="509" y="209" width="1" height="25" fill="#00ff00"/>
<rect x="511" y="209" width="1" height="25" fill="#00c800"/>
<rect x="513" y="209" width="1" height="25" fill="#00ff00"/>
<rect x="516" y="209" width="1" height="25" fill="#00c800"/>
<rect x="518" y="209" width="1" height="25" fill="#00ff00"/>
<rect x="520" y="209" width="1" height="25" fill="#00c800"/>
<rect x="523" y="209" width="1" height="25" fill="#00ff00"/>
<rect x="525" y="209" width="1" height="25" fill="#00c800"/>
<rect x="527" y="209" width="1" height="25" fill="#00ff00"/>
<rect x="530" y="209" width="1" height="25" fill="#00c800"/>
<rect x="534" y="209" width="1" height="25" fill="#00ff00"/>
<rect x="537" y="209" width="1" height="25" fill="#00c800"/>
<rect x="539" y="209" width="1" height="25" fill="#00ff00"/>
<rect x="541" y="209" width="1" height="25" fill="#00c800"/>
<rect x="544" y="209" width="1" height="25" fill="#00ff00"/>
<rect x="546" y="209" width="1" height="25" fill="#00c800"/>
<rect x="548" y="209" width="1" height="25" fill="#00ff00"/>
<rect x="551" y="209" width="1" height="25" fill="#00c800"/>
<rect x="553" y="209" width="1" height="25" fill="#00ff00"/>
<rect x="556" y="209" width="1" height="25" fill="#00c800"/>
<rect x="558" y="209" width="1" height="25" fill="#00ff00"/>
<rect x="563" y="209" width="1" height="25" fill="#00c800"/>
<rect x="565" y="209" width="1" height="25" fill="#00ff00"/>
<rect x="567" y="209" width="1" height="25" fill="#00c800"/>
<rect x="570" y="209" width="1" height="25" fill="#00ff00"/>
<rect x="572" y="209" width="1" height="25" fill="#00c800"/>
<rect x="574" y="209" width="1" height="25" fill="#00ff00"/>
<rect x="577" y="209" width="1" height="25" fill="#00c800"/>
<rect x="579" y="209" width="1" height="25" fill="#00ff00"/>
<rect x="581" y="209" width="1" height="25" fill="#00c800"/>
<rect x="120" y="234" width="1" height="26" fill="#8fe4f0"/>
<rect x="125" y="234" width="1" height="26" fill="#00c4e8"/>
<rect x="130" y="234" width="1" height="26" fill="#8fe4f0"/>
<rect x="134" y="234" width="1" height="26" fill="#00c4e8"/>
<rect x="144" y="234" width="1" height="26" fill="#8fe4f0"/>
<rect x="148" y="234" width="1" height="26" fill="#00c4e8"/>
<rect x="153" y="234" width="1" height="26" fill="#8fe4f0"/>
<rect x="158" y="234" width="1" height="26" fill="#00c4e8"/>
<rect x="162" y="234" width="1" height="26" fill="#8fe4f0"/>
<rect x="172" y="234" width="1" height="26" fill="#00c4e8"/>
<rect x="176" y="234" width="1" height="26" fill="#8fe4f0"/>
<rect x="181" y="234" width="1" height="26" fill="#00c4e8"/>
<rect x="186" y="234" width="1" height="26" fill="#8fe4f0"/>
<rect x="191" y="234" width="1" height="26" fill="#00c4e8"/>
<rect x="200" y="234" width="1" height="26" fill="#8fe4f0"/>
<rect x="205" y="234" width="1" height="26" fill="#00c4e8"/>
<rect x="209" y="234" width="1" height="26" fill="#8fe4f0"/>
<rect x="214" y="234" width="1" height="26" fill="#00c4e8"/>
<rect x="219" y="234" width="1" height="26" fill="#8fe4f0"/>
<rect x="228" y="234" width="1" height="26" fill="#00c4e8"/>
<rect x="233" y="234" width="1" height="26" fill="#8fe4f0"/>
<rect x="238" y="234" width="1" height="26" fill="#00c4e8"/>
<rect x="242" y="234" width="1" height="26" fill="#8fe4f0"/>
<rect x="247" y="234" width="1" height="26" fill="#00c4e8"/>
<rect x="256" y="234" width="1" height="26" fill="#8fe4f0"/>
<rect x="261" y="234" width="1" height="26" fill="#00c4e8"/>
<rect x="266" y="234" width="1" height="26" fill="#8fe4f0"/>
<rect x="270" y="234" width="1" height="26" fill="#00c4e8"/>
<rect x="275" y="234" width="1" height="26" fill="#8fe4f0"/>
<rect x="284" y="234" width="1" height="26" fill="#00c4e8"/>
<rect x="289" y="234" width="1" height="26" fill="#8fe4f0"/>
<rect x="294" y="234" width="1" height="26" fill="#00c4e8"/>
<rect x="299" y="234" width="1" height="26" fill="#8fe4f0"/>
<rect x="303" y="234" width="1" height="26" fill="#00c4e8"/>
<rect x="313" y="234" width="1" height="26" fill="#8fe4f0"/>
<rect x="317" y="234" width="1" height="26" fill="#00c4e8"/>
<rect x="322" y="234" width="1" height="26" fill="#8fe4f0"/>
<rect x="327" y="234" width="1" height="26" fill="#00c4e8"/>
<rect x="331" y="234" width="1" height="26" fill="#8fe4f0"/>
<rect x="341" y="234" width="1" height="26" fill="#00c4e8"/>
<rect x="345" y="234" width="1" height="26" fill="#8fe4f0"/>
<rect x="350" y="234" width="1" height="26" fill="#00c4e8"/>
<rect x="355" y="234" width="1" height="26" fill="#8fe4f0"/>
<rect x="360" y="234" width="1" height="26" fill="#00c4e8"/>
<rect x="369" y="234" width="1" height="26" fill="#8fe4f0"/>
<rect x="374" y="234" width="1" height="26" fill="#00c4e8"/>
<rect x="378" y="234" width="1" height="26" fill="#8fe4f0"/>
<rect x="383" y="234" width="1" height="26" fill="#00c4e8"/>
<rect x="388" y="234" width="1" height="26" fill="#8fe4f0"/>
<rect x="397" y="234" width="1" height="26" fill="#00c4e8"/>
<rect x="402" y="234" width="1" height="26" fill="#8fe4f0"/>
<rect x="406" y="234" width="1" height="26" fill="#00c4e8"/>
<rect x="411" y="234" width="1" height="26" fill="#8fe4f0"/>
<rect x="416" y="234" width="1" height="26" fill="#00c4e8"/>
<rect x="425" y="234" width="1" height="26" fill="#8fe4f0"/>
<rect x="430" y="234" width="1" height="26" fill="#00c4e8"/>
<rect x="435" y="234" width="1" height="26" fill="#8fe4f0"/>
<rect x="439" y="234" width="1" height="26" fill="#00c4e8"/>
<rect x="444" y="234" width="1" height="26" fill="#8fe4f0"/>
<rect x="453" y="234" width="1" height="26" fill="#00c4e8"/>
<rect x="458" y="234" width="1" height="26" fill="#8fe4f0"/>
<rect x="463" y="234" width="1" height="26" fill="#00c4e8"/>
<rect x="467" y="234" width="1" height="26" fill="#8fe4f0"/>
<rect x="472" y="234" width="1" height="26" fill="#00c4e8"/>
<rect x="482" y="234" width="1" height="26" fill="#8fe4f0"/>
<rect x="486" y="234" width="1" height="26" fill="#00c4e8"/>
<rect x="491" y="234" width="1" height="26" fill="#8fe4f0"/>
<rect x="496" y="234" width="1" height="26" fill="#00c4e8"/>
<rect x="501" y="234" width="1" height="26" fill="#8fe4f0"/>
<rect x="510" y="234" width="1" height="26" fill="#00c4e8"/>
<rect x="514" y="234" width="1" height="26" fill="#8fe4f0"/>
<rect x="519" y="234" width="1" height="26" fill="#00c4e8"/>
<rect x="524" y="234" width="1" height="26" fill="#8fe4f0"/>
<rect x="528" y="234" width="1" height="26" fill="#00c4e8"/>
<rect x="538" y="234" width="1" height="26" fill="#8fe4f0"/>
<rect x="543" y="234" width="1" height="26" fill="#00c4e8"/>
<rect x="547" y="234" width="1" height="26" fill="#8fe4f0"/>
<rect x="552" y="234" width="1" height="26" fill="#00c4e8"/>
<rect x="557" y="234" width="1" height="26" fill="#8fe4f0"/>
<rect x="566" y="234" width="1" height="26" fill="#00c4e8"/>
<rect x="571" y="234" width="1" height="26" fill="#8fe4f0"/>
<rect x="575" y="234" width="1" height="26" fill="#00c4e8"/>
<rect x="580" y="234" width="1" height="26" fill="#8fe4f0"/>
<rect x="180" y="260" width="1" height="25" fill="#8fe4f0"/>
<rect x="293" y="260" width="1" height="25" fill="#00c4e8"/>
<rect x="406" y="260" width="1" height="25" fill="#8fe4f0"/>
<rect x="518" y="260" width="1" height="25" fill="#00c4e8"/>
<rect x="120" y="285" width="7" height="26" fill="#ffff00"/>
<rect x="129" y="285" width="9" height="26" fill="#ffff00"/>
<rect x="139" y="285" width="8" height="26" fill="#ffff00"/>
<rect x="148" y="285" width="18" height="26" fill="#ffff00"/>
<rect x="168" y="285" width="7" height="26" fill="#ffff00"/>
<rect x="176" y="285" width="18" height="26" fill="#ffff00"/>
<rect x="196" y="285" width="7" height="26" fill="#ffff00"/>
<rect x="204" y="285" width="18" height="26" fill="#ffff00"/>
<rect x="224" y="285" width="7" height="26" fill="#ffff00"/>
<rect x="232" y="285" width="8" height="26" fill="#ffff00"/>
<rect x="242" y="285" width="8" height="26" fill="#ffff00"/>
<rect x="252" y="285" width="7" height="26" fill="#ffff00"/>
<rect x="260" y="285" width="19" height="26" fill="#ffff00"/>
<rect x="281" y="285" width="6" height="26" fill="#ffff00"/>
<rect x="288" y="285" width="19" height="26" fill="#ffff00"/>
<rect x="308" y="285" width="8" height="26" fill="#ffff00"/>
<rect x="317" y="285" width="18" height="26" fill="#ffff00"/>
<rect x="337" y="285" width="7" height="26" fill="#ffff00"/>
<rect x="345" y="285" width="8" height="26" fill="#ffff00"/>
<rect x="354" y="285" width="9" height="26" fill="#ffff00"/>
<rect x="365" y="285" width="7" height="26" fill="#ffff00"/>
<rect x="373" y="285" width="18" height="26" fill="#ffff00"/>
<rect x="393" y="285" width="7" height="26" fill="#ffff00"/>
<rect x="401" y="285" width="18" height="26" fill="#ffff00"/>
<rect x="421" y="285" width="7" height="26" fill="#ffff00"/>
<rect x="429" y="285" width="18" height="26" fill="#ffff00"/>
<rect x="449" y="285" width="7" height="26" fill="#ffff00"/>
<rect x="457" y="285" width="9" height="26" fill="#ffff00"/>
<rect x="467" y="285" width="8" height="26" fill="#ffff00"/>
<rect x="477" y="285" width="8" height="26" fill="#ffff00"/>
<rect x="486" y="285" width="18" height="26" fill="#ffff00"/>
<rect x="506" y="285" width="7" height="26" fill="#ffff00"/>
<rect x="514" y="285" width="18" height="26" fill="#ffff00"/>
<rect x="534" y="285" width="7" height="26" fill="#ffff00"/>
<rect x="542" y="285" width="18" height="26" fill="#ffff00"/>
<rect x="562" y="285" width="7" height="26" fill="#ffff00"/>
<rect x="570" y="285" width="9" height="26" fill="#ffff00"/>
<rect x="580" y="285" width="3" height="26" fill="#ffff00"/>
<path d="M121 285h1v26h-1zM123 285h1v26h-1zM125 285h1v26h-1zM129 285h1v26h-1zM131 285h1v26h-1zM133 285h1v26h-1zM135 285h1v26h-1zM137 285h1v26h-1zM139 285h1v26h-1zM141 285h1v26h-1zM143 285h1v26h-1zM145 285h1v26h-1zM149 285h1v26h-1zM151 285h1v26h-1zM153 285h1v26h-1zM155 285h1v26h-1zM157 285h1v26h-1zM159 285h1v26h-1zM161 285h1v26h-1zM163 285h1v26h-1zM165 285h1v26h-1zM169 285h1v26h-1zM171 285h1v26h-1zM173 285h1v26h-1zM177 285h1v26h-1zM179 285h1v26h-1zM181 285h1v26h-1zM183 285h1v26h-1zM185 285h1v26h-1zM187 285h1v26h-1zM189 285h1v26h-1zM191 285h1v26h-1zM193 285h1v26h-1zM197 285h1v26h-1zM199 285h1v26h-1zM201 285h1v26h-1zM205 285h1v26h-1zM207 285h1v26h-1zM209 285h1v26h-1zM211 285h1v26h-1zM213 285h1v26h-1zM215 285h1v26h-1zM217 285h1v26h-1zM219 285h1v26h-1zM221 285h1v26h-1zM225 285h1v26h-1zM227 285h1v26h-1zM229 285h1v26h-1zM233 285h1v26h-1zM235 285h1v26h-1zM237 285h1v26h-1zM239 285h1v26h-1zM243 285h1v26h-1zM245 285h1v26h-1zM247 285h1v26h-1zM249 285h1v26h-1zM253 285h1v26h-1zM255 285h1v26h-1zM257 285h1v26h-1zM261 285h1v26h-1zM263 285h1v26h-1zM265 285h1v26h-1zM267 285h1v26h-1zM269 285h1v26h-1zM271 285h1v26h-1zM273 285h1v26h-1zM275 285h1v26h-1zM277 285h1v26h-1zM281 285h1v26h-1zM283 285h1v26h-1zM285 285h1v26h-1zM289 285h1v26h-1zM291 285h1v26h-1zM293 285h1v26h-1zM295 285h1v26h-1zM297 285h1v26h-1zM299 285h1v26h-1zM301 285h1v26h-1zM303 285h1v26h-1zM305 285h1v26h-1zM309 285h1v26h-1zM311 285h1v26h-1zM313 285h1v26h-1zM315 285h1v26h-1zM317 285h1v26h-1zM319 285h1v26h-1zM321 285h1v26h-1zM323 285h1v26h-1zM325 285h1v26h-1zM327 285h1v26h-1zM329 285h1v26h-1zM331 285h1v26h-1zM333 285h1v26h-1zM337 285h1v26h-1zM339 285h1v26h-1zM341 285h1v26h-1zM343 285h1v26h-1zM345 285h1v26h-1zM347 285h1v26h-1zM349 285h1v26h-1zM351 285h1v26h-1zM355 285h1v26h-1zM357 285h1v26h-1zM359 285h1v26h-1zM361 285h1v26h-1zM365 285h1v26h-1zM367 285h1v26h-1zM369 285h1v26h-1zM371 285h1v26h-1zM373 285h1v26h-1zM375 285h1v26h-1zM377 285h1v26h-1zM379 285h1v26h-1zM381 285h1v26h-1zM383 285h1v26h-1zM385 285h1v26h-1zM387 285h1v26h-1zM389 285h1v26h-1zM393 285h1v26h-1zM395 285h1v26h-1zM397 285h1v26h-1zM399 285h1v26h-1zM401 285h1v26h-1zM403 285h1v26h-1zM405 285h1v26h-1zM407 285h1v26h-1zM409 285h1v26h-1zM411 285h1v26h-1zM413 285h1v26h-1zM415 285h1v26h-1zM417 285h1v26h-1zM421 285h1v26h-1zM423 285h1v26h-1zM425 285h1v26h-1zM427 285h1v26h-1zM429 285h1v26h-1zM431 285h1v26h-1zM433 285h1v26h-1zM435 285h1v26h-1zM437 285h1v26h-1zM439 285h1v26h-1zM441 285h1v26h-1zM443 285h1v26h-1zM445 285h1v26h-1zM449 285h1v26h-1zM451 285h1v26h-1zM453 285h1v26h-1zM455 285h1v26h-1zM457 285h1v26h-1zM459 285h1v26h-1zM461 285h1v26h-1zM463 285h1v26h-1zM465 285h1v26h-1zM467 285h1v26h-1zM469 285h1v26h-1zM471 285h1v26h-1zM473 285h1v26h-1zM477 285h1v26h-1zM479 285h1v26h-1zM481 285h1v26h-1zM483 285h1v26h-1zM487 285h1v26h-1zM489 285h1v26h-1zM491 285h1v26h-1zM493 285h1v26h-1zM495 285h1v26h-1zM497 285h1v26h-1zM499 285h1v26h-1zM501 285h1v26h-1zM503 285h1v26h-1zM507 285h1v26h-1zM509 285h1v26h-1zM511 285h1v26h-1zM515 285h1v26h-1zM517 285h1v26h-1zM519 285h1v26h-1zM521 285h1v26h-1zM523 285h1v26h-1zM525 285h1v26h-1zM527 285h1v26h-1zM529 285h1v26h-1zM531 285h1v26h-1zM535 285h1v26h-1zM537 285h1v26h-1zM539 285h1v26h-1zM543 285h1v26h-1zM545 285h1v26h-1zM547 285h1v26h-1zM549 285h1v26h-1zM551 285h1v26h-1zM553 285h1v26h-1zM555 285h1v26h-1zM557 285h1v26h-1zM559 285h1v26h-1zM563 285h1v26h-1zM565 285h1v26h-1zM567 285h1v26h-1zM571 285h1v26h-1zM573 285h1v26h-1zM575 285h1v26h-1zM577 285h1v26h-1zM581 285h1v26h-1z" fill="#d0d000"/>
<rect x="127" y="311" width="1" height="25" fill="#8fe4f0"/>
<rect x="239" y="311" width="2" height="25" fill="#00c4e8"/>
<rect x="352" y="311" width="2" height="25" fill="#8fe4f0"/>
<rect x="465" y="311" width="1" height="25" fill="#00c4e8"/>
<rect x="577" y="311" width="2" height="25" fill="#8fe4f0"/>
<rect x="231" y="336" width="1" height="26" fill="#00ff00"/>
<rect x="456" y="336" width="1" height="26" fill="#00c800"/>
<rect x="239" y="362" width="1" height="26" fill="#8fe4f0"/>
<rect x="465" y="362" width="1" height="26" fill="#00c4e8"/>
<rect x="138" y="388" width="2" height="25" fill="#ffff00"/>
<rect x="166" y="388" width="2" height="25" fill="#d0d000"/>
<rect x="194" y="388" width="2" height="25" fill="#ffff00"/>
<rect x="222" y="388" width="2" height="25" fill="#d0d000"/>
<rect x="250" y="388" width="2" height="25" fill="#ffff00"/>
<rect x="279" y="388" width="2" height="25" fill="#d0d000"/>
<rect x="307" y="388" width="1" height="25" fill="#ffff00"/>
<rect x="335" y="388" width="2" height="25" fill="#d0d000"/>
<rect x="363" y="388" width="2" height="25" fill="#ffff00"/>
<rect x="391" y="388" width="2" height="25" fill="#d0d000"/>
<rect x="419" y="388" width="2" height="25" fill="#ffff00"/>
<rect x="447" y="388" width="2" height="25" fill="#d0d000"/>
<rect x="475" y="388" width="2" height="25" fill="#ffff00"/>
<rect x="504" y="388" width="2" height="25" fill="#d0d000"/>
<rect x="532" y="388" width="2" height="25" fill="#ffff00"/>
<rect x="560" y="388" width="2" height="25" fill="#d0d000"/>
<rect x="114" y="474" width="1" height="10" fill="#fff"/>
<rect x="138" y="479" width="1" height="5" fill="#fff"/>
<rect x="161" y="479" width="1" height="5" fill="#fff"/>
<rect x="185" y="479" width="1" height="5" fill="#fff"/>
<rect x="208" y="474" width="1" height="10" fill="#fff"/>
<rect x="232" y="479" width="1" height="5" fill="#fff"/>
<rect x="255" y="479" width="1" height="5" fill="#fff"/>
<rect x="278" y="479" width="1" height="5" fill="#fff"/>
<rect x="302" y="474" width="1" height="10" fill="#fff"/>
<rect x="325" y="479" width="1" height="5" fill="#fff"/>
<rect x="349" y="479" width="1" height="5" fill="#fff"/>
<rect x="372" y="479" width="1" height="5" fill="#fff"/>
<rect x="396" y="474" width="1" height="10" fill="#fff"/>
<rect x="419" y="479" width="1" height="5" fill="#fff"/>
<rect x="443" y="479" width="1" height="5" fill="#fff"/>
<rect x="466" y="479" width="1" height="5" fill="#fff"/>
<rect x="490" y="474" width="1" height="10" fill="#fff"/>
<rect x="513" y="479" width="1" height="5" fill="#fff"/>
<rect x="536" y="479" width="1" height="5" fill="#fff"/>
<rect x="560" y="479" width="1" height="5" fill="#fff"/>
<rect x="583" y="474" width="1" height="10" fill="#fff"/>
<rect x="607" y="479" width="1" height="5" fill="#fff"/>
<rect x="630" y="479" width="1" height="5" fill="#fff"/>
<rect x="654" y="479" width="1" height="5" fill="#fff"/>
<rect x="108" y="475" width="12" height="9" fill="#fff"/>
<rect x="120" y="480" width="1" height="3" fill="#fff"/>
<rect x="121" y="480" width="1" height="3" fill="#fff"/>
<rect x="122" y="479" width="1" height="4" fill="#fff"/>
<rect x="123" y="477" width="1" height="6" fill="#fff"/>
<rect x="124" y="479" width="1" height="4" fill="#fff"/>
<rect x="125" y="480" width="1" height="3" fill="#fff"/>
<rect x="126" y="480" width="1" height="3" fill="#fff"/>
<rect x="127" y="480" width="1" height="3" fill="#fff"/>
<rect x="129" y="482" width="1" height="1" fill="#fff"/>
<rect x="130" y="480" width="1" height="3" fill="#fff"/>
<rect x="131" y="480" width="1" height="3" fill="#fff"/>
<rect x="132" y="476" width="1" height="7" fill="#fff"/>
<rect x="133" y="479" width="1" height="4" fill="#fff"/>
<rect x="134" y="480" width="1" height="3" fill="#fff"/>
<rect x="135" y="480" width="1" height="3" fill="#fff"/>
<rect x="136" y="480" width="1" height="3" fill="#fff"/>
<rect x="137" y="476" width="1" height="7" fill="#fff"/>
<rect x="138" y="482" width="1" height="1" fill="#fff"/>
<rect x="140" y="479" width="1" height="4" fill="#fff"/>
<rect x="141" y="480" width="1" height="3" fill="#fff"/>
<rect x="142" y="476" width="1" height="7" fill="#fff"/>
<rect x="143" y="479" width="1" height="4" fill="#fff"/>
<rect x="144" y="480" width="1" height="3" fill="#fff"/>
<rect x="145" y="480" width="1" height="3" fill="#fff"/>
<rect x="146" y="478" width="1" height="5" fill="#fff"/>
<rect x="147" y="479" width="1" height="4" fill="#fff"/>
<rect x="148" y="480" width="1" height="3" fill="#fff"/>
<rect x="149" y="480" width="1" height="3" fill="#fff"/>
<rect x="150" y="480" width="1" height="3" fill="#fff"/>
<rect x="151" y="477" width="1" height="6" fill="#fff"/>
<rect x="152" y="479" width="1" height="4" fill="#fff"/>
<rect x="153" y="480" width="1" height="3" fill="#fff"/>
<rect x="154" y="480" width="1" height="3" fill="#fff"/>
<rect x="155" y="480" width="1" height="3" fill="#fff"/>
<rect x="156" y="477" width="1" height="6" fill="#fff"/>
<rect x="157" y="479" width="1" height="4" fill="#fff"/>
<rect x="158" y="480" width="1" height="3" fill="#fff"/>
<rect x="159" y="480" width="1" height="3" fill="#fff"/>
<rect x="160" y="480" width="1" height="3" fill="#fff"/>
<rect x="161" y="476" width="1" height="7" fill="#fff"/>
<rect x="162" y="479" width="1" height="4" fill="#fff"/>
<rect x="163" y="479" width="1" height="4" fill="#fff"/>
<rect x="164" y="480" width="1" height="3" fill="#fff"/>
<rect x="165" y="478" width="1" height="5" fill="#fff"/>
<rect x="168" y="479" width="1" height="4" fill="#fff"/>
<rect x="169" y="480" width="1" height="3" fill="#fff"/>
<rect x="170" y="478" width="1" height="5" fill="#fff"/>
<rect x="171" y="479" width="1" height="4" fill="#fff"/>
<rect x="172" y="480" width="1" height="3" fill="#fff"/>
<rect x="173" y="479" width="1" height="4" fill="#fff"/>
<rect x="174" y="480" width="1" height="3" fill="#fff"/>
<rect x="175" y="478" width="1" height="5" fill="#fff"/>
<rect x="176" y="479" width="1" height="4" fill="#fff"/>
<rect x="177" y="479" width="1" height="4" fill="#fff"/>
<rect x="178" y="479" width="1" height="4" fill="#fff"/>
<rect x="179" y="476" width="1" height="7" fill="#fff"/>
<rect x="180" y="479" width="1" height="4" fill="#fff"/>
<rect x="181" y="480" width="1" height="3" fill="#fff"/>
<rect x="182" y="479" width="1" height="4" fill="#fff"/>
<rect x="183" y="480" width="1" height="3" fill="#fff"/>
<rect x="184" y="476" width="1" height="7" fill="#fff"/>
<rect x="185" y="479" width="1" height="4" fill="#fff"/>
<rect x="186" y="479" width="1" height="4" fill="#fff"/>
<rect x="187" y="479" width="1" height="4" fill="#fff"/>
<rect x="188" y="480" width="1" height="3" fill="#fff"/>
<rect x="189" y="477" width="1" height="6" fill="#fff"/>
<rect x="190" y="479" width="1" height="4" fill="#fff"/>
<rect x="191" y="479" width="1" height="4" fill="#fff"/>
<rect x="192" y="480" width="1" height="3" fill="#fff"/>
<rect x="193" y="478" width="1" height="5" fill="#fff"/>
<rect x="194" y="482" width="1" height="1" fill="#fff"/>
<rect x="195" y="482" width="1" height="1" fill="#fff"/>
<rect x="196" y="480" width="1" height="3" fill="#fff"/>
<rect x="197" y="479" width="1" height="4" fill="#fff"/>
<rect x="198" y="477" width="1" height="6" fill="#fff"/>
<rect x="199" y="479" width="1" height="4" fill="#fff"/>
<rect x="200" y="480" width="1" height="3" fill="#fff"/>
<rect x="201" y="480" width="1" height="3" fill="#fff"/>
<rect x="202" y="480" width="1" height="3" fill="#fff"/>
<rect x="203" y="476" width="1" height="7" fill="#fff"/>
<rect x="204" y="479" width="1" height="4" fill="#fff"/>
<rect x="205" y="480" width="1" height="3" fill="#fff"/>
<rect x="206" y="480" width="1" height="3" fill="#fff"/>
<rect x="207" y="476" width="1" height="7" fill="#fff"/>
<rect x="208" y="479" width="1" height="4" fill="#fff"/>
<rect x="209" y="480" width="1" height="3" fill="#fff"/>
<rect x="210" y="480" width="1" height="3" fill="#fff"/>
<rect x="211" y="479" width="1" height="4" fill="#fff"/>
<rect x="212" y="478" width="1" height="5" fill="#fff"/>
<rect x="213" y="479" width="1" height="4" fill="#fff"/>
<rect x="214" y="480" width="1" height="3" fill="#fff"/>
<rect x="215" y="480" width="1" height="3" fill="#fff"/>
<rect x="216" y="480" width="1" height="3" fill="#fff"/>
<rect x="217" y="476" width="1" height="7" fill="#fff"/>
<rect x="218" y="479" width="1" height="4" fill="#fff"/>
<rect x="219" y="480" width="1" height="3" fill="#fff"/>
<rect x="220" y="480" width="1" height="3" fill="#fff"/>
<rect x="221" y="480" width="1" height="3" fill="#fff"/>
<rect x="223" y="482" width="1" height="1" fill="#fff"/>
<rect x="224" y="480" width="1" height="3" fill="#fff"/>
<rect x="225" y="480" width="1" height="3" fill="#fff"/>
<rect x="226" y="476" width="1" height="7" fill="#fff"/>
<rect x="227" y="479" width="1" height="4" fill="#fff"/>
<rect x="228" y="480" width="1" height="3" fill="#fff"/>
<rect x="229" y="480" width="1" height="3" fill="#fff"/>
<rect x="230" y="479" width="1" height="4" fill="#fff"/>
<rect x="231" y="477" width="1" height="6" fill="#fff"/>
<rect x="232" y="479" width="1" height="4" fill="#fff"/>
<rect x="233" y="480" width="1" height="3" fill="#fff"/>
<rect x="234" y="479" width="1" height="4" fill="#fff"/>
<rect x="235" y="480" width="1" height="3" fill="#fff"/>
<rect x="236" y="478" width="1" height="5" fill="#fff"/>
<rect x="237" y="479" width="1" height="4" fill="#fff"/>
<rect x="238" y="479" width="1" height="4" fill="#fff"/>
<rect x="239" y="479" width="1" height="4" fill="#fff"/>
<rect x="242" y="480" width="1" height="3" fill="#fff"/>
<rect x="243" y="480" width="1" height="3" fill="#fff"/>
<rect x="244" y="480" width="1" height="3" fill="#fff"/>
<rect x="245" y="477" width="1" height="6" fill="#fff"/>
<rect x="246" y="479" width="1" height="4" fill="#fff"/>
<rect x="247" y="480" width="1" height="3" fill="#fff"/>
<rect x="248" y="480" width="1" height="3" fill="#fff"/>
<rect x="249" y="480" width="1" height="3" fill="#fff"/>
<rect x="252" y="480" width="1" height="3" fill="#fff"/>
<rect x="253" y="480" width="1" height="3" fill="#fff"/>
<rect x="254" y="477" width="1" height="6" fill="#fff"/>
<rect x="255" y="479" width="1" height="4" fill="#fff"/>
<rect x="256" y="480" width="1" height="3" fill="#fff"/>
<rect x="257" y="480" width="1" height="3" fill="#fff"/>
<rect x="258" y="480" width="1" height="3" fill="#fff"/>
<rect x="259" y="476" width="1" height="7" fill="#fff"/>
<rect x="260" y="479" width="1" height="4" fill="#fff"/>
<rect x="261" y="480" width="1" height="3" fill="#fff"/>
<rect x="262" y="479" width="1" height="4" fill="#fff"/>
<rect x="263" y="479" width="1" height="4" fill="#fff"/>
<rect x="264" y="477" width="1" height="6" fill="#fff"/>
<rect x="265" y="479" width="1" height="4" fill="#fff"/>
<rect x="266" y="480" width="1" height="3" fill="#fff"/>
<rect x="267" y="480" width="1" height="3" fill="#fff"/>
<rect x="268" y="477" width="1" height="6" fill="#fff"/>
<rect x="269" y="479" width="1" height="4" fill="#fff"/>
<rect x="270" y="479" width="1" height="4" fill="#fff"/>
<rect x="271" y="480" width="1" height="3" fill="#fff"/>
<rect x="272" y="480" width="1" height="3" fill="#fff"/>
<rect x="273" y="477" width="1" height="6" fill="#fff"/>
<rect x="274" y="479" width="1" height="4" fill="#fff"/>
<rect x="275" y="480" width="1" height="3" fill="#fff"/>
<rect x="276" y="480" width="1" height="3" fill="#fff"/>
<rect x="277" y="480" width="1" height="3" fill="#fff"/>
<rect x="278" y="478" width="1" height="5" fill="#fff"/>
<rect x="281" y="479" width="1" height="4" fill="#fff"/>
<rect x="282" y="480" width="1" height="3" fill="#fff"/>
<rect x="283" y="478" width="1" height="5" fill="#fff"/>
<rect x="284" y="479" width="1" height="4" fill="#fff"/>
<rect x="285" y="479" width="1" height="4" fill="#fff"/>
<rect x="286" y="480" width="1" height="3" fill="#fff"/>
<rect x="287" y="478" width="1" height="5" fill="#fff"/>
<rect x="288" y="479" width="1" height="4" fill="#fff"/>
<rect x="289" y="480" width="1" height="3" fill="#fff"/>
<rect x="290" y="479" width="1" height="4" fill="#fff"/>
<rect x="291" y="479" width="1" height="4" fill="#fff"/>
<rect x="292" y="478" width="1" height="5" fill="#fff"/>
<rect x="293" y="479" width="1" height="4" fill="#fff"/>
<rect x="294" y="479" width="1" height="4" fill="#fff"/>
<rect x="295" y="479" width="1" height="4" fill="#fff"/>
<rect x="296" y="480" width="1" height="3" fill="#fff"/>
<rect x="297" y="476" width="1" height="7" fill="#fff"/>
<rect x="298" y="479" width="1" height="4" fill="#fff"/>
<rect x="299" y="480" width="1" height="3" fill="#fff"/>
<rect x="300" y="480" width="1" height="3" fill="#fff"/>
<rect x="301" y="478" width="1" height="5" fill="#fff"/>
<rect x="302" y="479" width="1" height="4" fill="#fff"/>
<rect x="303" y="479" width="1" height="4" fill="#fff"/>
<rect x="304" y="479" width="1" height="4" fill="#fff"/>
<rect x="305" y="480" width="1" height="3" fill="#fff"/>
<rect x="306" y="477" width="1" height="6" fill="#fff"/>
<rect x="307" y="482" width="1" height="1" fill="#fff"/>
<rect x="309" y="480" width="1" height="3" fill="#fff"/>
<rect x="310" y="480" width="1" height="3" fill="#fff"/>
<rect x="311" y="476" width="1" height="7" fill="#fff"/>
<rect x="312" y="479" width="1" height="4" fill="#fff"/>
<rect x="313" y="480" width="1" height="3" fill="#fff"/>
<rect x="314" y="480" width="1" height="3" fill="#fff"/>
<rect x="315" y="478" width="1" height="5" fill="#fff"/>
<rect x="316" y="479" width="1" height="4" fill="#fff"/>
<rect x="317" y="480" width="1" height="3" fill="#fff"/>
<rect x="318" y="479" width="1" height="4" fill="#fff"/>
<rect x="319" y="479" width="1" height="4" fill="#fff"/>
<rect x="320" y="477" width="1" height="6" fill="#fff"/>
<rect x="321" y="479" width="1" height="4" fill="#fff"/>
<rect x="322" y="479" width="1" height="4" fill="#fff"/>
<rect x="323" y="479" width="1" height="4" fill="#fff"/>
<rect x="324" y="479" width="1" height="4" fill="#fff"/>
<rect x="325" y="476" width="1" height="7" fill="#fff"/>
<rect x="326" y="479" width="1" height="4" fill="#fff"/>
<rect x="327" y="479" width="1" height="4" fill="#fff"/>
<rect x="328" y="480" width="1" height="3" fill="#fff"/>
<rect x="329" y="477" width="1" height="6" fill="#fff"/>
<rect x="330" y="479" width="1" height="4" fill="#fff"/>
<rect x="331" y="480" width="1" height="3" fill="#fff"/>
<rect x="332" y="480" width="1" height="3" fill="#fff"/>
<rect x="333" y="479" width="1" height="4" fill="#fff"/>
<rect x="334" y="477" width="1" height="6" fill="#fff"/>
<rect x="337" y="480" width="1" height="3" fill="#fff"/>
<rect x="338" y="479" width="1" height="4" fill="#fff"/>
<rect x="339" y="477" width="1" height="6" fill="#fff"/>
<rect x="340" y="479" width="1" height="4" fill="#fff"/>
<rect x="341" y="479" width="1" height="4" fill="#fff"/>
<rect x="342" y="479" width="1" height="4" fill="#fff"/>
<rect x="343" y="479" width="1" height="4" fill="#fff"/>
<rect x="344" y="478" width="1" height="5" fill="#fff"/>
<rect x="345" y="479" width="1" height="4" fill="#fff"/>
<rect x="346" y="480" width="1" height="3" fill="#fff"/>
<rect x="347" y="480" width="1" height="3" fill="#fff"/>
<rect x="348" y="477" width="1" height="6" fill="#fff"/>
<rect x="349" y="479" width="1" height="4" fill="#fff"/>
<rect x="350" y="480" width="1" height="3" fill="#fff"/>
<rect x="351" y="479" width="1" height="4" fill="#fff"/>
<rect x="352" y="480" width="1" height="3" fill="#fff"/>
<rect x="353" y="482" width="1" height="1" fill="#fff"/>
<rect x="355" y="480" width="1" height="3" fill="#fff"/>
<rect x="356" y="480" width="1" height="3" fill="#fff"/>
<rect x="357" y="480" width="1" height="3" fill="#fff"/>
<rect x="358" y="477" width="1" height="6" fill="#fff"/>
<rect x="359" y="479" width="1" height="4" fill="#fff"/>
<rect x="360" y="480" width="1" height="3" fill="#fff"/>
<rect x="361" y="480" width="1" height="3" fill="#fff"/>
<rect x="362" y="476" width="1" height="7" fill="#fff"/>
<rect x="363" y="482" width="1" height="1" fill="#fff"/>
<rect x="365" y="480" width="1" height="3" fill="#fff"/>
<rect x="366" y="480" width="1" height="3" fill="#fff"/>
<rect x="367" y="478" width="1" height="5" fill="#fff"/>
<rect x="368" y="479" width="1" height="4" fill="#fff"/>
<rect x="369" y="479" width="1" height="4" fill="#fff"/>
<rect x="370" y="480" width="1" height="3" fill="#fff"/>
<rect x="371" y="480" width="1" height="3" fill="#fff"/>
<rect x="372" y="477" width="1" height="6" fill="#fff"/>
<rect x="373" y="479" width="1" height="4" fill="#fff"/>
<rect x="374" y="480" width="1" height="3" fill="#fff"/>
<rect x="375" y="480" width="1" height="3" fill="#fff"/>
<rect x="376" y="476" width="1" height="7" fill="#fff"/>
<rect x="377" y="479" width="1" height="4" fill="#fff"/>
<rect x="378" y="480" width="1" height="3" fill="#fff"/>
<rect x="379" y="480" width="1" height="3" fill="#fff"/>
<rect x="380" y="479" width="1" height="4" fill="#fff"/>
<rect x="381" y="478" width="1" height="5" fill="#fff"/>
<rect x="382" y="479" width="1" height="4" fill="#fff"/>
<rect x="383" y="480" width="1" height="3" fill="#fff"/>
<rect x="384" y="480" width="1" height="3" fill="#fff"/>
<rect x="385" y="479" width="1" height="4" fill="#fff"/>
<rect x="386" y="477" width="1" height="6" fill="#fff"/>
<rect x="387" y="479" width="1" height="4" fill="#fff"/>
<rect x="388" y="480" width="1" height="3" fill="#fff"/>
<rect x="389" y="480" width="1" height="3" fill="#fff"/>
<rect x="390" y="479" width="1" height="4" fill="#fff"/>
<rect x="393" y="479" width="1" height="4" fill="#fff"/>
<rect x="394" y="479" width="1" height="4" fill="#fff"/>
<rect x="395" y="477" width="1" height="6" fill="#fff"/>
<rect x="396" y="479" width="1" height="4" fill="#fff"/>
<rect x="397" y="480" width="1" height="3" fill="#fff"/>
<rect x="398" y="480" width="1" height="3" fill="#fff"/>
<rect x="399" y="479" width="1" height="4" fill="#fff"/>
<rect x="400" y="477" width="1" height="6" fill="#fff"/>
<rect x="401" y="479" width="1" height="4" fill="#fff"/>
<rect x="402" y="480" width="1" height="3" fill="#fff"/>
<rect x="403" y="479" width="1" height="4" fill="#fff"/>
<rect x="404" y="479" width="1" height="4" fill="#fff"/>
<rect x="405" y="478" width="1" height="5" fill="#fff"/>
<rect x="406" y="479" width="1" height="4" fill="#fff"/>
<rect x="407" y="480" width="1" height="3" fill="#fff"/>
<rect x="408" y="480" width="1" height="3" fill="#fff"/>
<rect x="409" y="477" width="1" height="6" fill="#fff"/>
<rect x="410" y="479" width="1" height="4" fill="#fff"/>
<rect x="411" y="480" width="1" height="3" fill="#fff"/>
<rect x="412" y="480" width="1" height="3" fill="#fff"/>
<rect x="413" y="480" width="1" height="3" fill="#fff"/>
<rect x="414" y="477" width="1" height="6" fill="#fff"/>
<rect x="415" y="479" width="1" height="4" fill="#fff"/>
<rect x="416" y="480" width="1" height="3" fill="#fff"/>
<rect x="417" y="479" width="1" height="4" fill="#fff"/>
<rect x="418" y="479" width="1" height="4" fill="#fff"/>
<rect x="419" y="482" width="1" height="1" fill="#fff"/>
<rect x="421" y="479" width="1" height="4" fill="#fff"/>
<rect x="422" y="479" width="1" height="4" fill="#fff"/>
<rect x="423" y="478" width="1" height="5" fill="#fff"/>
<rect x="424" y="479" width="1" height="4" fill="#fff"/>
<rect x="425" y="479" width="1" height="4" fill="#fff"/>
<rect x="426" y="480" width="1" height="3" fill="#fff"/>
<rect x="427" y="479" width="1" height="4" fill="#fff"/>
<rect x="428" y="478" width="1" height="5" fill="#fff"/>
<rect x="429" y="479" width="1" height="4" fill="#fff"/>
<rect x="430" y="479" width="1" height="4" fill="#fff"/>
<rect x="431" y="479" width="1" height="4" fill="#fff"/>
<rect x="432" y="480" width="1" height="3" fill="#fff"/>
<rect x="433" y="478" width="1" height="5" fill="#fff"/>
<rect x="434" y="479" width="1" height="4" fill="#fff"/>
<rect x="435" y="480" width="1" height="3" fill="#fff"/>
<rect x="436" y="480" width="1" height="3" fill="#fff"/>
<rect x="437" y="476" width="1" height="7" fill="#fff"/>
<rect x="438" y="479" width="1" height="4" fill="#fff"/>
<rect x="439" y="480" width="1" height="3" fill="#fff"/>
<rect x="440" y="480" width="1" height="3" fill="#fff"/>
<rect x="441" y="480" width="1" height="3" fill="#fff"/>
<rect x="442" y="477" width="1" height="6" fill="#fff"/>
<rect x="443" y="479" width="1" height="4" fill="#fff"/>
<rect x="444" y="480" width="1" height="3" fill="#fff"/>
<rect x="445" y="480" width="1" height="3" fill="#fff"/>
<rect x="446" y="480" width="1" height="3" fill="#fff"/>
<rect x="447" y="477" width="1" height="6" fill="#fff"/>
<rect x="448" y="482" width="1" height="1" fill="#fff"/>
<rect x="449" y="482" width="1" height="1" fill="#fff"/>
<rect x="450" y="480" width="1" height="3" fill="#fff"/>
<rect x="451" y="480" width="1" height="3" fill="#fff"/>
<rect x="452" y="476" width="1" height="7" fill="#fff"/>
<rect x="453" y="479" width="1" height="4" fill="#fff"/>
<rect x="454" y="480" width="1" height="3" fill="#fff"/>
<rect x="455" y="480" width="1" height="3" fill="#fff"/>
<rect x="456" y="477" width="1" height="6" fill="#fff"/>
<rect x="457" y="479" width="1" height="4" fill="#fff"/>
<rect x="458" y="479" width="1" height="4" fill="#fff"/>
<rect x="459" y="480" width="1" height="3" fill="#fff"/>
<rect x="460" y="480" width="1" height="3" fill="#fff"/>
<rect x="461" y="478" width="1" height="5" fill="#fff"/>
<rect x="462" y="479" width="1" height="4" fill="#fff"/>
<rect x="463" y="479" width="1" height="4" fill="#fff"/>
<rect x="464" y="480" width="1" height="3" fill="#fff"/>
<rect x="465" y="480" width="1" height="3" fill="#fff"/>
<rect x="468" y="480" width="1" height="3" fill="#fff"/>
<rect x="469" y="479" width="1" height="4" fill="#fff"/>
<rect x="470" y="476" width="1" height="7" fill="#fff"/>
<rect x="471" y="479" width="1" height="4" fill="#fff"/>
<rect x="472" y="480" width="1" height="3" fill="#fff"/>
<rect x="473" y="479" width="1" height="4" fill="#fff"/>
<rect x="474" y="480" width="1" height="3" fill="#fff"/>
<rect x="475" y="477" width="1" height="6" fill="#fff"/>
<rect x="478" y="480" width="1" height="3" fill="#fff"/>
<rect x="479" y="479" width="1" height="4" fill="#fff"/>
<rect x="480" y="478" width="1" height="5" fill="#fff"/>
<rect x="481" y="479" width="1" height="4" fill="#fff"/>
<rect x="482" y="480" width="1" height="3" fill="#fff"/>
<rect x="483" y="480" width="1" height="3" fill="#fff"/>
<rect x="484" y="478" width="1" height="5" fill="#fff"/>
<rect x="485" y="479" width="1" height="4" fill="#fff"/>
<rect x="486" y="480" width="1" height="3" fill="#fff"/>
<rect x="487" y="480" width="1" height="3" fill="#fff"/>
<rect x="488" y="480" width="1" height="3" fill="#fff"/>
<rect x="489" y="476" width="1" height="7" fill="#fff"/>
<rect x="490" y="479" width="1" height="4" fill="#fff"/>
<rect x="491" y="480" width="1" height="3" fill="#fff"/>
<rect x="492" y="480" width="1" height="3" fill="#fff"/>
<rect x="493" y="480" width="1" height="3" fill="#fff"/>
<rect x="494" y="478" width="1" height="5" fill="#fff"/>
<rect x="495" y="479" width="1" height="4" fill="#fff"/>
<rect x="496" y="480" width="1" height="3" fill="#fff"/>
<rect x="497" y="480" width="1" height="3" fill="#fff"/>
<rect x="498" y="477" width="1" height="6" fill="#fff"/>
<rect x="499" y="479" width="1" height="4" fill="#fff"/>
<rect x="500" y="480" width="1" height="3" fill="#fff"/>
<rect x="501" y="480" width="1" height="3" fill="#fff"/>
<rect x="502" y="479" width="1" height="4" fill="#fff"/>
<rect x="503" y="478" width="1" height="5" fill="#fff"/>
<rect x="505" y="482" width="1" height="1" fill="#fff"/>
<rect x="506" y="480" width="1" height="3" fill="#fff"/>
<rect x="507" y="479" width="1" height="4" fill="#fff"/>
<rect x="508" y="477" width="1" height="6" fill="#fff"/>
<rect x="509" y="479" width="1" height="4" fill="#fff"/>
<rect x="510" y="479" width="1" height="4" fill="#fff"/>
<rect x="511" y="479" width="1" height="4" fill="#fff"/>
<rect x="512" y="480" width="1" height="3" fill="#fff"/>
<rect x="513" y="477" width="1" height="6" fill="#fff"/>
<rect x="514" y="479" width="1" height="4" fill="#fff"/>
<rect x="515" y="480" width="1" height="3" fill="#fff"/>
<rect x="516" y="480" width="1" height="3" fill="#fff"/>
<rect x="517" y="477" width="1" height="6" fill="#fff"/>
<rect x="518" y="479" width="1" height="4" fill="#fff"/>
<rect x="519" y="480" width="1" height="3" fill="#fff"/>
<rect x="520" y="480" width="1" height="3" fill="#fff"/>
<rect x="521" y="479" width="1" height="4" fill="#fff"/>
<rect x="522" y="476" width="1" height="7" fill="#fff"/>
<rect x="523" y="479" width="1" height="4" fill="#fff"/>
<rect x="524" y="480" width="1" height="3" fill="#fff"/>
<rect x="525" y="479" width="1" height="4" fill="#fff"/>
<rect x="526" y="479" width="1" height="4" fill="#fff"/>
<rect x="527" y="476" width="1" height="7" fill="#fff"/>
<rect x="528" y="479" width="1" height="4" fill="#fff"/>
<rect x="529" y="480" width="1" height="3" fill="#fff"/>
<rect x="530" y="480" width="1" height="3" fill="#fff"/>
<rect x="531" y="477" width="1" height="6" fill="#fff"/>
<rect x="532" y="482" width="1" height="1" fill="#fff"/>
<rect x="534" y="480" width="1" height="3" fill="#fff"/>
<rect x="535" y="479" width="1" height="4" fill="#fff"/>
<rect x="536" y="477" width="1" height="6" fill="#fff"/>
<rect x="537" y="479" width="1" height="4" fill="#fff"/>
<rect x="538" y="480" width="1" height="3" fill="#fff"/>
<rect x="539" y="479" width="1" height="4" fill="#fff"/>
<rect x="540" y="480" width="1" height="3" fill="#fff"/>
<rect x="541" y="476" width="1" height="7" fill="#fff"/>
<rect x="542" y="479" width="1" height="4" fill="#fff"/>
<rect x="543" y="480" width="1" height="3" fill="#fff"/>
<rect x="544" y="480" width="1" height="3" fill="#fff"/>
<rect x="545" y="477" width="1" height="6" fill="#fff"/>
<rect x="546" y="479" width="1" height="4" fill="#fff"/>
<rect x="547" y="480" width="1" height="3" fill="#fff"/>
<rect x="548" y="480" width="1" height="3" fill="#fff"/>
<rect x="549" y="480" width="1" height="3" fill="#fff"/>
<rect x="550" y="477" width="1" height="6" fill="#fff"/>
<rect x="551" y="479" width="1" height="4" fill="#fff"/>
<rect x="552" y="480" width="1" height="3" fill="#fff"/>
<rect x="553" y="480" width="1" height="3" fill="#fff"/>
<rect x="554" y="480" width="1" height="3" fill="#fff"/>
<rect x="555" y="477" width="1" height="6" fill="#fff"/>
<rect x="556" y="479" width="1" height="4" fill="#fff"/>
<rect x="557" y="480" width="1" height="3" fill="#fff"/>
<rect x="558" y="479" width="1" height="4" fill="#fff"/>
<rect x="559" y="476" width="1" height="7" fill="#fff"/>
<rect x="562" y="480" width="1" height="3" fill="#fff"/>
<rect x="563" y="480" width="1" height="3" fill="#fff"/>
<rect x="564" y="477" width="1" height="6" fill="#fff"/>
<rect x="565" y="479" width="1" height="4" fill="#fff"/>
<rect x="566" y="479" width="1" height="4" fill="#fff"/>
<rect x="567" y="480" width="1" height="3" fill="#fff"/>
<rect x="568" y="480" width="1" height="3" fill="#fff"/>
<rect x="569" y="477" width="1" height="6" fill="#fff"/>
<rect x="570" y="479" width="1" height="4" fill="#fff"/>
<rect x="571" y="480" width="1" height="3" fill="#fff"/>
<rect x="572" y="479" width="1" height="4" fill="#fff"/>
<rect x="573" y="479" width="1" height="4" fill="#fff"/>
<rect x="574" y="477" width="1" height="6" fill="#fff"/>
<rect x="575" y="479" width="1" height="4" fill="#fff"/>
<rect x="576" y="480" width="1" height="3" fill="#fff"/>
<rect x="577" y="479" width="1" height="4" fill="#fff"/>
<rect x="579" y="482" width="1" height="1" fill="#fff"/>
<rect x="580" y="480" width="1" height="3" fill="#fff"/>
<rect x="581" y="479" width="1" height="4" fill="#fff"/>
<rect x="582" y="479" width="1" height="4" fill="#fff"/>
<rect x="583" y="478" width="1" height="5" fill="#fff"/>
<rect x="109" y="483" width="562" height="1" fill="#ff0000"/>
<rect x="108" y="483" width="12" height="1" fill="#fff"/>
<rect x="120" y="483" width="1" height="1" fill="#fff"/>
<rect x="123" y="483" width="2" height="1" fill="#fff"/>
<rect x="130" y="483" width="3" height="1" fill="#fff"/>
<rect x="136" y="483" width="2" height="1" fill="#fff"/>
<rect x="143" y="483" width="1" height="1" fill="#fff"/>
<rect x="150" y="483" width="1" height="1" fill="#fff"/>
<rect x="154" y="483" width="2" height="1" fill="#fff"/>
<rect x="161" y="483" width="2" height="1" fill="#fff"/>
<rect x="167" y="483" width="2" height="1" fill="#fff"/>
<rect x="173" y="483" width="2" height="1" fill="#fff"/>
<rect x="180" y="483" width="1" height="1" fill="#fff"/>
<rect x="185" y="483" width="2" height="1" fill="#fff"/>
<rect x="193" y="483" width="2" height="1" fill="#fff"/>
<rect x="197" y="483" width="1" height="1" fill="#fff"/>
<rect x="207" y="483" width="1" height="1" fill="#fff"/>
<rect x="210" y="483" width="1" height="1" fill="#fff"/>
<rect x="217" y="483" width="2" height="1" fill="#fff"/>
<rect x="225" y="483" width="1" height="1" fill="#fff"/>
<rect x="231" y="483" width="2" height="1" fill="#fff"/>
<rect x="238" y="483" width="2" height="1" fill="#fff"/>
<rect x="243" y="483" width="3" height="1" fill="#fff"/>
<rect x="249" y="483" width="1" height="1" fill="#fff"/>
<rect x="252" y="483" width="1" height="1" fill="#fff"/>
<rect x="257" y="483" width="3" height="1" fill="#fff"/>
<rect x="262" y="483" width="2" height="1" fill="#fff"/>
<rect x="267" y="483" width="2" height="1" fill="#fff"/>
<rect x="273" y="483" width="3" height="1" fill="#fff"/>
<rect x="279" y="483" width="1" height="1" fill="#fff"/>
<rect x="289" y="483" width="2" height="1" fill="#fff"/>
<rect x="296" y="483" width="2" height="1" fill="#fff"/>
<rect x="307" y="483" width="3" height="1" fill="#fff"/>
<rect x="313" y="483" width="2" height="1" fill="#fff"/>
<rect x="319" y="483" width="2" height="1" fill="#fff"/>
<rect x="323" y="483" width="2" height="1" fill="#fff"/>
<rect x="329" y="483" width="3" height="1" fill="#fff"/>
<rect x="336" y="483" width="1" height="1" fill="#fff"/>
<rect x="346" y="483" width="3" height="1" fill="#fff"/>
<rect x="355" y="483" width="1" height="1" fill="#fff"/>
<rect x="358" y="483" width="2" height="1" fill="#fff"/>
<rect x="363" y="483" width="2" height="1" fill="#fff"/>
<rect x="370" y="483" width="2" height="1" fill="#fff"/>
<rect x="377" y="483" width="2" height="1" fill="#fff"/>
<rect x="381" y="483" width="1" height="1" fill="#fff"/>
<rect x="384" y="483" width="2" height="1" fill="#fff"/>
<rect x="395" y="483" width="2" height="1" fill="#fff"/>
<rect x="403" y="483" width="2" height="1" fill="#fff"/>
<rect x="407" y="483" width="1" height="1" fill="#fff"/>
<rect x="413" y="483" width="3" height="1" fill="#fff"/>
<rect x="421" y="483" width="2" height="1" fill="#fff"/>
<rect x="426" y="483" width="1" height="1" fill="#fff"/>
<rect x="430" y="483" width="1" height="1" fill="#fff"/>
<rect x="434" y="483" width="3" height="1" fill="#fff"/>
<rect x="446" y="483" width="1" height="1" fill="#fff"/>
<rect x="456" y="483" width="2" height="1" fill="#fff"/>
<rect x="460" y="483" width="3" height="1" fill="#fff"/>
<rect x="465" y="483" width="1" height="1" fill="#fff"/>
<rect x="469" y="483" width="1" height="1" fill="#fff"/>
<rect x="476" y="483" width="1" height="1" fill="#fff"/>
<rect x="486" y="483" width="2" height="1" fill="#fff"/>
<rect x="491" y="483" width="2" height="1" fill="#fff"/>
<rect x="499" y="483" width="2" height="1" fill="#fff"/>
<rect x="510" y="483" width="1" height="1" fill="#fff"/>
<rect x="513" y="483" width="1" height="1" fill="#fff"/>
<rect x="518" y="483" width="3" height="1" fill="#fff"/>
<rect x="527" y="483" width="1" height="1" fill="#fff"/>
<rect x="533" y="483" width="2" height="1" fill="#fff"/>
<rect x="538" y="483" width="3" height="1" fill="#fff"/>
<rect x="543" y="483" width="1" height="1" fill="#fff"/>
<rect x="550" y="483" width="2" height="1" fill="#fff"/>
<rect x="557" y="483" width="2" height="1" fill="#fff"/>
<rect x="563" y="483" width="1" height="1" fill="#fff"/>
<rect x="569" y="483" width="3" height="1" fill="#fff"/>
<rect x="575" y="483" width="3" height="1" fill="#fff"/>
<rect x="581" y="483" width="1" height="1" fill="#fff"/>
<rect x="583" y="474" width="1" height="10" fill="#fff"/>
<text x="97.5 104.7 112.5 116.8 124.0" y="14.2" fill="#fff" font-size="11.5" xml:space="preserve">20:00</text>
<text x="97.5 104.7 112.5 116.8 124.0" y="502.2" fill="#fff" font-size="11.5" xml:space="preserve">20:00</text>
<text x="191.5 198.7 206.4 210.8 218.0" y="14.2" fill="#fff" font-size="11.5" xml:space="preserve">16:00</text>
<text x="191.5 198.7 206.4 210.8 218.0" y="502.2" fill="#fff" font-size="11.5" xml:space="preserve">16:00</text>
<text x="285.5 292.7 300.4 304.8 312.0" y="14.2" fill="#fff" font-size="11.5" xml:space="preserve">12:00</text>
<text x="285.5 292.7 300.4 304.8 312.0" y="502.2" fill="#fff" font-size="11.5" xml:space="preserve">12:00</text>
<text x="379.5 386.7 394.4 398.8 406.0" y="14.2" fill="#fff" font-size="11.5" xml:space="preserve">08:00</text>
<text x="379.5 386.7 394.4 398.8 406.0" y="502.2" fill="#fff" font-size="11.5" xml:space="preserve">08:00</text>
<text x="473.5 480.7 488.4 492.8 500.0" y="14.2" fill="#fff" font-size="11.5" xml:space="preserve">04:00</text>
<text x="473.5 480.7 488.4 492.8 500.0" y="502.2" fill="#fff" font-size="11.5" xml:space="preserve">04:00</text>
<text x="566.5 573.7 581.5 585.8 593.0" y="14.2" fill="#fff" font-size="11.5" xml:space="preserve">00:00</text>
<text x="566.5 573.7 581.5 585.8 593.0" y="502.2" fill="#fff" font-size="11.5" xml:space="preserve">00:00</text>
<text y="62" fill="#fff" font-size="12" xml:space="preserve"><tspan x="18" textLength="18.5" lengthAdjust="spacing">TM </tspan><tspan x="40" textLength="55" lengthAdjust="spacing">SUBMODE</tspan></text>
<text y="109" fill="#fff" font-size="12" xml:space="preserve"><tspan x="8" textLength="63.5" lengthAdjust="spacing">LASCO/EIT </tspan><tspan x="76" textLength="25" lengthAdjust="spacing">(OP)</tspan></text>
<text x="47.6 56.4 64.9 73.1 80.1 87.3 95.1" y="150.0" fill="#fff" font-size="12" xml:space="preserve">OS<tspan dy="-2.7">_</tspan><tspan dy="2.7">3342</tspan></text>
<text x="47.6 56.4 64.9 73.1 80.1 87.3 95.1" y="175.5" fill="#fff" font-size="12" xml:space="preserve">OS<tspan dy="-2.7">_</tspan><tspan dy="2.7">3361</tspan></text>
<text x="47.6 56.4 64.9 73.1 80.1 87.3 95.1" y="201.0" fill="#fff" font-size="12" xml:space="preserve">OS<tspan dy="-2.7">_</tspan><tspan dy="2.7">3387</tspan></text>
<text x="47.6 56.4 64.9 73.1 80.1 87.3 95.1" y="226.5" fill="#fff" font-size="12" xml:space="preserve">OS<tspan dy="-2.7">_</tspan><tspan dy="2.7">3389</tspan></text>
<text x="47.6 56.4 64.9 73.1 80.1 87.3 95.1" y="252.0" fill="#fff" font-size="12" xml:space="preserve">OS<tspan dy="-2.7">_</tspan><tspan dy="2.7">3390</tspan></text>
<text x="47.6 56.4 64.9 73.1 80.1 87.3 95.1" y="277.5" fill="#fff" font-size="12" xml:space="preserve">OS<tspan dy="-2.7">_</tspan><tspan dy="2.7">3405</tspan></text>
<text x="47.6 56.4 64.9 73.1 80.1 87.3 95.1" y="303.0" fill="#fff" font-size="12" xml:space="preserve">OS<tspan dy="-2.7">_</tspan><tspan dy="2.7">3406</tspan></text>
<text x="47.6 56.4 64.9 73.1 80.1 87.3 95.1" y="328.5" fill="#fff" font-size="12" xml:space="preserve">OS<tspan dy="-2.7">_</tspan><tspan dy="2.7">3532</tspan></text>
<text x="47.6 56.4 64.9 73.1 80.1 87.3 95.1" y="354.0" fill="#fff" font-size="12" xml:space="preserve">OS<tspan dy="-2.7">_</tspan><tspan dy="2.7">3568</tspan></text>
<text x="47.6 56.4 64.9 73.1 80.1 87.3 95.1" y="380.0" fill="#fff" font-size="12" xml:space="preserve">OS<tspan dy="-2.7">_</tspan><tspan dy="2.7">3570</tspan></text>
<text x="47.6 56.4 64.9 73.1 80.1 87.3 95.1" y="405.5" fill="#fff" font-size="12" xml:space="preserve">OS<tspan dy="-2.7">_</tspan><tspan dy="2.7">3654</tspan></text>
<text x="8" y="453" text-anchor="start" fill="#fff" font-size="12" textLength="82" lengthAdjust="spacing">LASCO-buffer</text>
<text x="107.5" y="39.0" text-anchor="end" fill="#fff" font-size="12">5</text>
<text x="107.5" y="48.2" text-anchor="end" fill="#fff" font-size="12">4</text>
<text x="107.5" y="57.5" text-anchor="end" fill="#fff" font-size="12">3</text>
<text x="107.5" y="66.7" text-anchor="end" fill="#fff" font-size="12">2</text>
<text x="107.5" y="75.9" text-anchor="end" fill="#fff" font-size="12">1</text>
<text x="86.2 93.5 100.8" y="432.0" fill="#fff" font-size="12" xml:space="preserve">100</text>
<text x="93.5 100.8" y="444.0" fill="#fff" font-size="12" xml:space="preserve">80</text>
<text x="93.5 100.8" y="477.5" fill="#fff" font-size="12" xml:space="preserve">20</text>
<text x="100.8" y="488.5" fill="#fff" font-size="12" xml:space="preserve">0</text>
<text x="307.7 315.0 322.5 329.9 340.3 347.0 354.5 364.7 371.0 378.5 385.0 391.4 398.9 406.3 410.3 417.7 424.6 429.6 437.2 444.6 448.6 456.0 463.6" y="518" fill="#fff" font-size="12" xml:space="preserve">2009/11/23 18:36:00.000</text>
<text x="13.5" y="520" text-anchor="start" fill="#ff0000" font-size="10" textLength="11" lengthAdjust="spacing">C1</text>
<text x="35" y="520" text-anchor="start" fill="#00ff00" font-size="10" textLength="12" lengthAdjust="spacing">C2</text>
<text x="56" y="520" text-anchor="start" fill="#8fe4f0" font-size="10" textLength="12" lengthAdjust="spacing">C3</text>
<text x="77" y="520" text-anchor="start" fill="#ffff00" font-size="10" textLength="13" lengthAdjust="spacing">EIT</text>
</svg>
</body></html>
